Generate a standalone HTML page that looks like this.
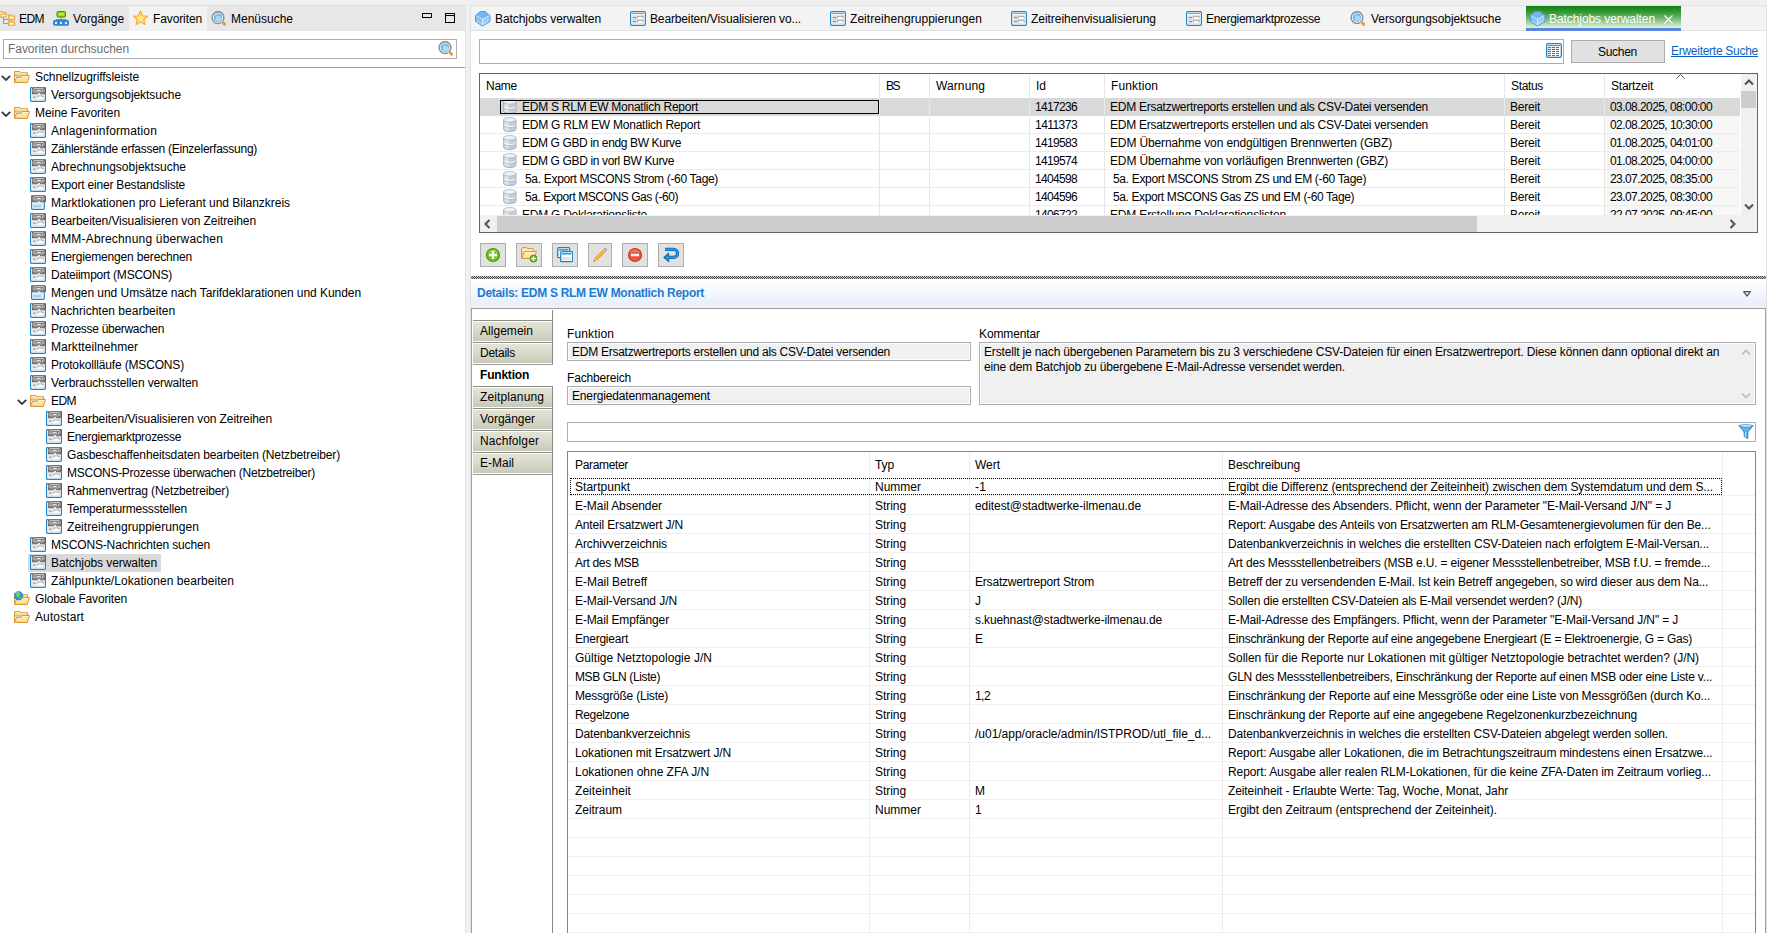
<!DOCTYPE html>
<html lang="de"><head><meta charset="utf-8"><title>Batchjobs verwalten</title>
<style>
html,body{margin:0;padding:0}
body{width:1767px;height:933px;position:relative;overflow:hidden;background:#f0f0f0;font:12px "Liberation Sans",sans-serif;color:#000}
div,span,svg{position:absolute;box-sizing:border-box}
.t{white-space:pre;color:#000}
.g{white-space:pre;color:#6d6d6d}
</style></head><body>

<!-- left panel -->
<div style="left:0px;top:5px;width:466px;height:26px;background:#e7e7e7;border-top:1px solid #dedede"></div>
<div style="left:129px;top:6px;width:78px;height:25px;background:#f2f2f2"></div>
<div style="left:0px;top:31px;width:466px;height:902px;background:#fff;border-right:1px solid #e3e3e3"></div>
<svg width="16" height="16" viewBox="0 0 16 16" style="position:absolute;left:0px;top:10px;"><path d="M3.5 7 V13.5 H8.5 M3.5 9.5 H8.5" stroke="#9a9a9a" stroke-width="1" fill="none"/>
<path d="M-0.5 2.5 L0.5 1.5 H3 L4 2.5 H6 V7 H-0.5Z" fill="#ffe08a" stroke="#dda24a" stroke-width="1"/>
<path d="M-0.3 6.8 L1 4.2 H7 L5.8 7Z" fill="#fff0b8" stroke="#dda24a" stroke-width="0.8"/>
<path d="M8.7 5 H11 L12 6 H14.6 V9.9 H8.7Z" fill="#ffe08a" stroke="#dda24a" stroke-width="1.1"/>
<path d="M8.7 11.2 H11 L12 12.2 H14.6 V15.8 H8.7Z" fill="#ffe08a" stroke="#dda24a" stroke-width="1.1"/>
<path d="M9.6 7.4 H13.8 M9.6 13.6 H13.8" stroke="#fff3c4" stroke-width="1"/></svg>
<span class="t" style="left:19px;top:9px;line-height:20px;letter-spacing:-0.557px;">EDM</span>
<svg width="16" height="16" viewBox="0 0 16 16" style="position:absolute;left:53px;top:11px;"><path d="M8 6 V8.5 M3 10 V8.5 H13 V10" stroke="#8a8a8a" stroke-width="1" fill="none"/>
<rect x="4" y="0.5" width="8.5" height="5.5" rx="1" fill="#8fd000" stroke="#4d8f00" stroke-width="1"/>
<rect x="5.5" y="2" width="5.5" height="2.5" fill="#b6e84a"/>
<rect x="0.5" y="9.5" width="15" height="4.8" rx="0.8" fill="#2f93d6" stroke="#1f7fc0" stroke-width="0.8"/>
<rect x="2" y="11" width="2" height="2" fill="#dff0ff"/><rect x="7" y="11" width="2" height="2" fill="#dff0ff"/><rect x="12" y="11" width="2" height="2" fill="#dff0ff"/>
<path d="M5.5 9.6 V14.2 M10.5 9.6 V14.2" stroke="#1f7fc0" stroke-width="0.8"/></svg>
<span class="t" style="left:73px;top:9px;line-height:20px;letter-spacing:-0.047px;">Vorgänge</span>
<svg width="16" height="16" viewBox="0 0 16 16" style="position:absolute;left:133px;top:10px;"><path d="M7.5 1 L9.5 5.7 L14.6 6.2 L10.8 9.6 L11.9 14.6 L7.5 12 L3.1 14.6 L4.2 9.6 L0.4 6.2 L5.5 5.7Z" fill="#ffd65a" stroke="#f3ab2c" stroke-width="1.1" stroke-linejoin="round"/>
<path d="M7.5 3.4 L8.8 6.6 L12.2 6.9 L9.6 9.2 L10.4 12.4 L7.5 10.7 L4.6 12.4 L5.4 9.2 L2.8 6.9 L6.2 6.6Z" fill="#ffe889"/></svg>
<span class="t" style="left:153px;top:9px;line-height:20px;letter-spacing:-0.113px;">Favoriten</span>
<svg width="16" height="16" viewBox="0 0 16 16" style="position:absolute;left:211px;top:11px;"><circle cx="7" cy="6.6" r="5.9" fill="#ffffff" stroke="#8f8f8f" stroke-width="1.5"/>
<circle cx="7" cy="6.6" r="4.3" fill="#66b4ee"/>
<circle cx="7.5" cy="7.6" r="3" fill="#9fdcf9"/>
<path d="M3.9 5.6 A3.4 3.4 0 0 1 8.1 3.2 A5.4 5.4 0 0 0 3.9 5.6Z" fill="#cfecff"/>
<path d="M11 10.6 L12 11.6" stroke="#bdbdbd" stroke-width="2.2"/>
<path d="M12.6 12.2 L13.5 13.1" stroke="#e9992c" stroke-width="3" stroke-linecap="round"/></svg>
<span class="t" style="left:231px;top:9px;line-height:20px;">Menüsuche</span>
<div style="left:422px;top:13px;width:10px;height:5px;border:1px solid #000"></div>
<div style="left:445px;top:13px;width:10px;height:10px;border:1px solid #000;border-top-width:1px"></div>
<div style="left:445px;top:15px;width:10px;height:1px;background:#000"></div>
<div style="left:3px;top:39px;width:454px;height:20px;border:1px solid #abadb3;background:#fff"></div>
<span class="g" style="left:8px;top:40px;line-height:18px;letter-spacing:-0.05px;">Favoriten durchsuchen</span>
<svg width="16" height="16" viewBox="0 0 16 16" style="position:absolute;left:438px;top:41px;"><circle cx="7" cy="6.6" r="5.9" fill="#ffffff" stroke="#8f8f8f" stroke-width="1.5"/>
<circle cx="7" cy="6.6" r="4.3" fill="#66b4ee"/>
<circle cx="7.5" cy="7.6" r="3" fill="#9fdcf9"/>
<path d="M3.9 5.6 A3.4 3.4 0 0 1 8.1 3.2 A5.4 5.4 0 0 0 3.9 5.6Z" fill="#cfecff"/>
<path d="M11 10.6 L12 11.6" stroke="#bdbdbd" stroke-width="2.2"/>
<path d="M12.6 12.2 L13.5 13.1" stroke="#e9992c" stroke-width="3" stroke-linecap="round"/></svg>
<div style="left:0px;top:67px;width:465px;height:1px;background:#a0a0a0"></div>
<!-- tree -->
<svg width="10" height="6" viewBox="0 0 10 6" style="position:absolute;left:1px;top:75px;"><path d="M0.8 0.8 L5 5 L9.2 0.8" fill="none" stroke="#3a3a3a" stroke-width="1.8"/></svg>
<svg width="16" height="16" viewBox="0 0 16 16" style="position:absolute;left:14px;top:70px;"><path d="M0.5 12.5 V1.5 H6 L7 2.8 H13.5 V6 H0.5Z" fill="#f8d98a" stroke="#d39a40" stroke-width="1" stroke-linejoin="round"/>
<path d="M1.5 2.6 H5.6 L6.6 3.9 H12.5" stroke="#fdf0c4" stroke-width="1" fill="none"/>
<path d="M0.6 12.5 L2.3 7.5 H6.9 L8.1 5.5 H15.5 L13.4 12.5Z" fill="#ffe394" stroke="#d39a40" stroke-width="1" stroke-linejoin="round"/>
<path d="M3 8.6 H7.4 L8.6 6.6 H14.2" stroke="#fff6d8" stroke-width="1" fill="none"/>
<path d="M1.8 11.5 H13" stroke="#ffd56c" stroke-width="1" fill="none"/></svg>
<span class="t" style="left:35px;top:68px;line-height:18px;letter-spacing:-0.087px;">Schnellzugriffsleiste</span>
<svg width="16" height="16" viewBox="0 0 16 16" style="position:absolute;left:30px;top:87px;"><rect x="0.6" y="0.6" width="14.8" height="13.8" rx="0.8" fill="#fdfdfd" stroke="#1c86c6" stroke-width="1.2"/>
<rect x="1.3" y="6" width="13.4" height="7" fill="#e9e9e9"/>
<rect x="2" y="0" width="5.4" height="1.3" fill="#9a9a9a"/><rect x="8.8" y="0" width="5.6" height="1.3" fill="#9a9a9a"/>
<rect x="2" y="0.6" width="14" height="5.6" rx="1.2" fill="#5e5e5e"/>
<rect x="3.1" y="1.7" width="11" height="3.2" rx="1" fill="none" stroke="#d8d8d8" stroke-width="1"/>
<rect x="6.4" y="2.8" width="4.4" height="1" fill="#ffffff"/><rect x="4.4" y="2.8" width="1" height="1" fill="#fff"/><rect x="11.8" y="2.8" width="1" height="1" fill="#fff"/>
<path d="M2 6 H16 V7.2 H10.6 L9 5.6 L7.4 7.2 H2Z" fill="#777777"/>
<path d="M7.2 7.6 L9 5.9 L10.8 7.6Z" fill="#f6f6f6"/>
<rect x="3" y="9.6" width="2.6" height="1" fill="#8a8a8a"/>
<rect x="7.6" y="9" width="5.6" height="3" fill="#ffffff"/><path d="M7.6 10.6 V9 H13.2 V10.6" fill="none" stroke="#a8a8a8" stroke-width="0.9"/></svg>
<span class="t" style="left:51px;top:86px;line-height:18px;letter-spacing:-0.064px;">Versorgungsobjektsuche</span>
<svg width="10" height="6" viewBox="0 0 10 6" style="position:absolute;left:1px;top:111px;"><path d="M0.8 0.8 L5 5 L9.2 0.8" fill="none" stroke="#3a3a3a" stroke-width="1.8"/></svg>
<svg width="16" height="16" viewBox="0 0 16 16" style="position:absolute;left:14px;top:106px;"><path d="M0.5 12.5 V1.5 H6 L7 2.8 H13.5 V6 H0.5Z" fill="#f8d98a" stroke="#d39a40" stroke-width="1" stroke-linejoin="round"/>
<path d="M1.5 2.6 H5.6 L6.6 3.9 H12.5" stroke="#fdf0c4" stroke-width="1" fill="none"/>
<path d="M0.6 12.5 L2.3 7.5 H6.9 L8.1 5.5 H15.5 L13.4 12.5Z" fill="#ffe394" stroke="#d39a40" stroke-width="1" stroke-linejoin="round"/>
<path d="M3 8.6 H7.4 L8.6 6.6 H14.2" stroke="#fff6d8" stroke-width="1" fill="none"/>
<path d="M1.8 11.5 H13" stroke="#ffd56c" stroke-width="1" fill="none"/></svg>
<span class="t" style="left:35px;top:104px;line-height:18px;letter-spacing:-0.069px;">Meine Favoriten</span>
<svg width="16" height="16" viewBox="0 0 16 16" style="position:absolute;left:30px;top:123px;"><rect x="0.6" y="0.6" width="14.8" height="13.8" rx="0.8" fill="#fdfdfd" stroke="#1c86c6" stroke-width="1.2"/>
<rect x="1.3" y="6" width="13.4" height="7" fill="#e9e9e9"/>
<rect x="2" y="0" width="5.4" height="1.3" fill="#9a9a9a"/><rect x="8.8" y="0" width="5.6" height="1.3" fill="#9a9a9a"/>
<rect x="2" y="0.6" width="14" height="5.6" rx="1.2" fill="#5e5e5e"/>
<rect x="3.1" y="1.7" width="11" height="3.2" rx="1" fill="none" stroke="#d8d8d8" stroke-width="1"/>
<rect x="6.4" y="2.8" width="4.4" height="1" fill="#ffffff"/><rect x="4.4" y="2.8" width="1" height="1" fill="#fff"/><rect x="11.8" y="2.8" width="1" height="1" fill="#fff"/>
<path d="M2 6 H16 V7.2 H10.6 L9 5.6 L7.4 7.2 H2Z" fill="#777777"/>
<path d="M7.2 7.6 L9 5.9 L10.8 7.6Z" fill="#f6f6f6"/>
<rect x="3" y="9.6" width="2.6" height="1" fill="#8a8a8a"/>
<rect x="7.6" y="9" width="5.6" height="3" fill="#ffffff"/><path d="M7.6 10.6 V9 H13.2 V10.6" fill="none" stroke="#a8a8a8" stroke-width="0.9"/></svg>
<span class="t" style="left:51px;top:122px;line-height:18px;letter-spacing:0.145px;">Anlageninformation</span>
<svg width="16" height="16" viewBox="0 0 16 16" style="position:absolute;left:30px;top:141px;"><rect x="0.6" y="0.6" width="14.8" height="13.8" rx="0.8" fill="#fdfdfd" stroke="#1c86c6" stroke-width="1.2"/>
<rect x="1.3" y="6" width="13.4" height="7" fill="#e9e9e9"/>
<rect x="2" y="0" width="5.4" height="1.3" fill="#9a9a9a"/><rect x="8.8" y="0" width="5.6" height="1.3" fill="#9a9a9a"/>
<rect x="2" y="0.6" width="14" height="5.6" rx="1.2" fill="#5e5e5e"/>
<rect x="3.1" y="1.7" width="11" height="3.2" rx="1" fill="none" stroke="#d8d8d8" stroke-width="1"/>
<rect x="6.4" y="2.8" width="4.4" height="1" fill="#ffffff"/><rect x="4.4" y="2.8" width="1" height="1" fill="#fff"/><rect x="11.8" y="2.8" width="1" height="1" fill="#fff"/>
<path d="M2 6 H16 V7.2 H10.6 L9 5.6 L7.4 7.2 H2Z" fill="#777777"/>
<path d="M7.2 7.6 L9 5.9 L10.8 7.6Z" fill="#f6f6f6"/>
<rect x="3" y="9.6" width="2.6" height="1" fill="#8a8a8a"/>
<rect x="7.6" y="9" width="5.6" height="3" fill="#ffffff"/><path d="M7.6 10.6 V9 H13.2 V10.6" fill="none" stroke="#a8a8a8" stroke-width="0.9"/></svg>
<span class="t" style="left:51px;top:140px;line-height:18px;letter-spacing:-0.258px;">Zählerstände erfassen (Einzelerfassung)</span>
<svg width="16" height="16" viewBox="0 0 16 16" style="position:absolute;left:30px;top:159px;"><rect x="0.6" y="0.6" width="14.8" height="13.8" rx="0.8" fill="#fdfdfd" stroke="#1c86c6" stroke-width="1.2"/>
<rect x="1.3" y="6" width="13.4" height="7" fill="#e9e9e9"/>
<rect x="2" y="0" width="5.4" height="1.3" fill="#9a9a9a"/><rect x="8.8" y="0" width="5.6" height="1.3" fill="#9a9a9a"/>
<rect x="2" y="0.6" width="14" height="5.6" rx="1.2" fill="#5e5e5e"/>
<rect x="3.1" y="1.7" width="11" height="3.2" rx="1" fill="none" stroke="#d8d8d8" stroke-width="1"/>
<rect x="6.4" y="2.8" width="4.4" height="1" fill="#ffffff"/><rect x="4.4" y="2.8" width="1" height="1" fill="#fff"/><rect x="11.8" y="2.8" width="1" height="1" fill="#fff"/>
<path d="M2 6 H16 V7.2 H10.6 L9 5.6 L7.4 7.2 H2Z" fill="#777777"/>
<path d="M7.2 7.6 L9 5.9 L10.8 7.6Z" fill="#f6f6f6"/>
<rect x="3" y="9.6" width="2.6" height="1" fill="#8a8a8a"/>
<rect x="7.6" y="9" width="5.6" height="3" fill="#ffffff"/><path d="M7.6 10.6 V9 H13.2 V10.6" fill="none" stroke="#a8a8a8" stroke-width="0.9"/></svg>
<span class="t" style="left:51px;top:158px;line-height:18px;letter-spacing:0.012px;">Abrechnungsobjektsuche</span>
<svg width="16" height="16" viewBox="0 0 16 16" style="position:absolute;left:30px;top:177px;"><rect x="0.6" y="0.6" width="14.8" height="13.8" rx="0.8" fill="#fdfdfd" stroke="#1c86c6" stroke-width="1.2"/>
<rect x="1.3" y="6" width="13.4" height="7" fill="#e9e9e9"/>
<rect x="2" y="0" width="5.4" height="1.3" fill="#9a9a9a"/><rect x="8.8" y="0" width="5.6" height="1.3" fill="#9a9a9a"/>
<rect x="2" y="0.6" width="14" height="5.6" rx="1.2" fill="#5e5e5e"/>
<rect x="3.1" y="1.7" width="11" height="3.2" rx="1" fill="none" stroke="#d8d8d8" stroke-width="1"/>
<rect x="6.4" y="2.8" width="4.4" height="1" fill="#ffffff"/><rect x="4.4" y="2.8" width="1" height="1" fill="#fff"/><rect x="11.8" y="2.8" width="1" height="1" fill="#fff"/>
<path d="M2 6 H16 V7.2 H10.6 L9 5.6 L7.4 7.2 H2Z" fill="#777777"/>
<path d="M7.2 7.6 L9 5.9 L10.8 7.6Z" fill="#f6f6f6"/>
<rect x="3" y="9.6" width="2.6" height="1" fill="#8a8a8a"/>
<rect x="7.6" y="9" width="5.6" height="3" fill="#ffffff"/><path d="M7.6 10.6 V9 H13.2 V10.6" fill="none" stroke="#a8a8a8" stroke-width="0.9"/></svg>
<span class="t" style="left:51px;top:176px;line-height:18px;letter-spacing:-0.207px;">Export einer Bestandsliste</span>
<svg width="16" height="16" viewBox="0 0 16 16" style="position:absolute;left:30px;top:195px;"><rect x="1.6" y="0.6" width="12.6" height="13.8" rx="0.8" fill="#fdfdfd" stroke="#1c86c6" stroke-width="1.2"/>
<rect x="2.4" y="7" width="11" height="3" fill="#d9ecf8"/>
<rect x="3" y="10" width="8.6" height="2.6" fill="#a7d0e9"/>
<rect x="2" y="0" width="5.4" height="1.3" fill="#9a9a9a"/><rect x="8.8" y="0" width="5.6" height="1.3" fill="#9a9a9a"/>
<rect x="2" y="0.6" width="14" height="5.6" rx="1.2" fill="#5e5e5e"/>
<rect x="3.1" y="1.7" width="11" height="3.2" rx="1" fill="none" stroke="#d8d8d8" stroke-width="1"/>
<rect x="6.4" y="2.8" width="4.4" height="1" fill="#ffffff"/><rect x="4.4" y="2.8" width="1" height="1" fill="#fff"/><rect x="11.8" y="2.8" width="1" height="1" fill="#fff"/>
<path d="M2 6 H16 V7.2 H10.6 L9 5.6 L7.4 7.2 H2Z" fill="#777777"/></svg>
<span class="t" style="left:51px;top:194px;line-height:18px;letter-spacing:-0.024px;">Marktlokationen pro Lieferant und Bilanzkreis</span>
<svg width="16" height="16" viewBox="0 0 16 16" style="position:absolute;left:30px;top:213px;"><rect x="0.6" y="0.6" width="14.8" height="13.8" rx="0.8" fill="#fdfdfd" stroke="#1c86c6" stroke-width="1.2"/>
<rect x="1.3" y="6" width="13.4" height="7" fill="#e9e9e9"/>
<rect x="2" y="0" width="5.4" height="1.3" fill="#9a9a9a"/><rect x="8.8" y="0" width="5.6" height="1.3" fill="#9a9a9a"/>
<rect x="2" y="0.6" width="14" height="5.6" rx="1.2" fill="#5e5e5e"/>
<rect x="3.1" y="1.7" width="11" height="3.2" rx="1" fill="none" stroke="#d8d8d8" stroke-width="1"/>
<rect x="6.4" y="2.8" width="4.4" height="1" fill="#ffffff"/><rect x="4.4" y="2.8" width="1" height="1" fill="#fff"/><rect x="11.8" y="2.8" width="1" height="1" fill="#fff"/>
<path d="M2 6 H16 V7.2 H10.6 L9 5.6 L7.4 7.2 H2Z" fill="#777777"/>
<path d="M7.2 7.6 L9 5.9 L10.8 7.6Z" fill="#f6f6f6"/>
<rect x="3" y="9.6" width="2.6" height="1" fill="#8a8a8a"/>
<rect x="7.6" y="9" width="5.6" height="3" fill="#ffffff"/><path d="M7.6 10.6 V9 H13.2 V10.6" fill="none" stroke="#a8a8a8" stroke-width="0.9"/></svg>
<span class="t" style="left:51px;top:212px;line-height:18px;letter-spacing:-0.091px;">Bearbeiten/Visualisieren von Zeitreihen</span>
<svg width="16" height="16" viewBox="0 0 16 16" style="position:absolute;left:30px;top:231px;"><rect x="0.6" y="0.6" width="14.8" height="13.8" rx="0.8" fill="#fdfdfd" stroke="#1c86c6" stroke-width="1.2"/>
<rect x="1.3" y="6" width="13.4" height="7" fill="#e9e9e9"/>
<rect x="2" y="0" width="5.4" height="1.3" fill="#9a9a9a"/><rect x="8.8" y="0" width="5.6" height="1.3" fill="#9a9a9a"/>
<rect x="2" y="0.6" width="14" height="5.6" rx="1.2" fill="#5e5e5e"/>
<rect x="3.1" y="1.7" width="11" height="3.2" rx="1" fill="none" stroke="#d8d8d8" stroke-width="1"/>
<rect x="6.4" y="2.8" width="4.4" height="1" fill="#ffffff"/><rect x="4.4" y="2.8" width="1" height="1" fill="#fff"/><rect x="11.8" y="2.8" width="1" height="1" fill="#fff"/>
<path d="M2 6 H16 V7.2 H10.6 L9 5.6 L7.4 7.2 H2Z" fill="#777777"/>
<path d="M7.2 7.6 L9 5.9 L10.8 7.6Z" fill="#f6f6f6"/>
<rect x="3" y="9.6" width="2.6" height="1" fill="#8a8a8a"/>
<rect x="7.6" y="9" width="5.6" height="3" fill="#ffffff"/><path d="M7.6 10.6 V9 H13.2 V10.6" fill="none" stroke="#a8a8a8" stroke-width="0.9"/></svg>
<span class="t" style="left:51px;top:230px;line-height:18px;letter-spacing:0.184px;">MMM-Abrechnung überwachen</span>
<svg width="16" height="16" viewBox="0 0 16 16" style="position:absolute;left:30px;top:249px;"><rect x="0.6" y="0.6" width="14.8" height="13.8" rx="0.8" fill="#fdfdfd" stroke="#1c86c6" stroke-width="1.2"/>
<rect x="1.3" y="6" width="13.4" height="7" fill="#e9e9e9"/>
<rect x="2" y="0" width="5.4" height="1.3" fill="#9a9a9a"/><rect x="8.8" y="0" width="5.6" height="1.3" fill="#9a9a9a"/>
<rect x="2" y="0.6" width="14" height="5.6" rx="1.2" fill="#5e5e5e"/>
<rect x="3.1" y="1.7" width="11" height="3.2" rx="1" fill="none" stroke="#d8d8d8" stroke-width="1"/>
<rect x="6.4" y="2.8" width="4.4" height="1" fill="#ffffff"/><rect x="4.4" y="2.8" width="1" height="1" fill="#fff"/><rect x="11.8" y="2.8" width="1" height="1" fill="#fff"/>
<path d="M2 6 H16 V7.2 H10.6 L9 5.6 L7.4 7.2 H2Z" fill="#777777"/>
<path d="M7.2 7.6 L9 5.9 L10.8 7.6Z" fill="#f6f6f6"/>
<rect x="3" y="9.6" width="2.6" height="1" fill="#8a8a8a"/>
<rect x="7.6" y="9" width="5.6" height="3" fill="#ffffff"/><path d="M7.6 10.6 V9 H13.2 V10.6" fill="none" stroke="#a8a8a8" stroke-width="0.9"/></svg>
<span class="t" style="left:51px;top:248px;line-height:18px;letter-spacing:-0.163px;">Energiemengen berechnen</span>
<svg width="16" height="16" viewBox="0 0 16 16" style="position:absolute;left:30px;top:267px;"><rect x="0.6" y="0.6" width="14.8" height="13.8" rx="0.8" fill="#fdfdfd" stroke="#1c86c6" stroke-width="1.2"/>
<rect x="1.3" y="6" width="13.4" height="7" fill="#e9e9e9"/>
<rect x="2" y="0" width="5.4" height="1.3" fill="#9a9a9a"/><rect x="8.8" y="0" width="5.6" height="1.3" fill="#9a9a9a"/>
<rect x="2" y="0.6" width="14" height="5.6" rx="1.2" fill="#5e5e5e"/>
<rect x="3.1" y="1.7" width="11" height="3.2" rx="1" fill="none" stroke="#d8d8d8" stroke-width="1"/>
<rect x="6.4" y="2.8" width="4.4" height="1" fill="#ffffff"/><rect x="4.4" y="2.8" width="1" height="1" fill="#fff"/><rect x="11.8" y="2.8" width="1" height="1" fill="#fff"/>
<path d="M2 6 H16 V7.2 H10.6 L9 5.6 L7.4 7.2 H2Z" fill="#777777"/>
<path d="M7.2 7.6 L9 5.9 L10.8 7.6Z" fill="#f6f6f6"/>
<rect x="3" y="9.6" width="2.6" height="1" fill="#8a8a8a"/>
<rect x="7.6" y="9" width="5.6" height="3" fill="#ffffff"/><path d="M7.6 10.6 V9 H13.2 V10.6" fill="none" stroke="#a8a8a8" stroke-width="0.9"/></svg>
<span class="t" style="left:51px;top:266px;line-height:18px;letter-spacing:-0.218px;">Dateiimport (MSCONS)</span>
<svg width="16" height="16" viewBox="0 0 16 16" style="position:absolute;left:30px;top:285px;"><rect x="1.6" y="0.6" width="12.6" height="13.8" rx="0.8" fill="#fdfdfd" stroke="#1c86c6" stroke-width="1.2"/>
<rect x="2.4" y="7" width="11" height="3" fill="#d9ecf8"/>
<rect x="3" y="10" width="8.6" height="2.6" fill="#a7d0e9"/>
<rect x="2" y="0" width="5.4" height="1.3" fill="#9a9a9a"/><rect x="8.8" y="0" width="5.6" height="1.3" fill="#9a9a9a"/>
<rect x="2" y="0.6" width="14" height="5.6" rx="1.2" fill="#5e5e5e"/>
<rect x="3.1" y="1.7" width="11" height="3.2" rx="1" fill="none" stroke="#d8d8d8" stroke-width="1"/>
<rect x="6.4" y="2.8" width="4.4" height="1" fill="#ffffff"/><rect x="4.4" y="2.8" width="1" height="1" fill="#fff"/><rect x="11.8" y="2.8" width="1" height="1" fill="#fff"/>
<path d="M2 6 H16 V7.2 H10.6 L9 5.6 L7.4 7.2 H2Z" fill="#777777"/></svg>
<span class="t" style="left:51px;top:284px;line-height:18px;letter-spacing:-0.049px;">Mengen und Umsätze nach Tarifdeklarationen und Kunden</span>
<svg width="16" height="16" viewBox="0 0 16 16" style="position:absolute;left:30px;top:303px;"><rect x="0.6" y="0.6" width="14.8" height="13.8" rx="0.8" fill="#fdfdfd" stroke="#1c86c6" stroke-width="1.2"/>
<rect x="1.3" y="6" width="13.4" height="7" fill="#e9e9e9"/>
<rect x="2" y="0" width="5.4" height="1.3" fill="#9a9a9a"/><rect x="8.8" y="0" width="5.6" height="1.3" fill="#9a9a9a"/>
<rect x="2" y="0.6" width="14" height="5.6" rx="1.2" fill="#5e5e5e"/>
<rect x="3.1" y="1.7" width="11" height="3.2" rx="1" fill="none" stroke="#d8d8d8" stroke-width="1"/>
<rect x="6.4" y="2.8" width="4.4" height="1" fill="#ffffff"/><rect x="4.4" y="2.8" width="1" height="1" fill="#fff"/><rect x="11.8" y="2.8" width="1" height="1" fill="#fff"/>
<path d="M2 6 H16 V7.2 H10.6 L9 5.6 L7.4 7.2 H2Z" fill="#777777"/>
<path d="M7.2 7.6 L9 5.9 L10.8 7.6Z" fill="#f6f6f6"/>
<rect x="3" y="9.6" width="2.6" height="1" fill="#8a8a8a"/>
<rect x="7.6" y="9" width="5.6" height="3" fill="#ffffff"/><path d="M7.6 10.6 V9 H13.2 V10.6" fill="none" stroke="#a8a8a8" stroke-width="0.9"/></svg>
<span class="t" style="left:51px;top:302px;line-height:18px;">Nachrichten bearbeiten</span>
<svg width="16" height="16" viewBox="0 0 16 16" style="position:absolute;left:30px;top:321px;"><rect x="0.6" y="0.6" width="14.8" height="13.8" rx="0.8" fill="#fdfdfd" stroke="#1c86c6" stroke-width="1.2"/>
<rect x="1.3" y="6" width="13.4" height="7" fill="#e9e9e9"/>
<rect x="2" y="0" width="5.4" height="1.3" fill="#9a9a9a"/><rect x="8.8" y="0" width="5.6" height="1.3" fill="#9a9a9a"/>
<rect x="2" y="0.6" width="14" height="5.6" rx="1.2" fill="#5e5e5e"/>
<rect x="3.1" y="1.7" width="11" height="3.2" rx="1" fill="none" stroke="#d8d8d8" stroke-width="1"/>
<rect x="6.4" y="2.8" width="4.4" height="1" fill="#ffffff"/><rect x="4.4" y="2.8" width="1" height="1" fill="#fff"/><rect x="11.8" y="2.8" width="1" height="1" fill="#fff"/>
<path d="M2 6 H16 V7.2 H10.6 L9 5.6 L7.4 7.2 H2Z" fill="#777777"/>
<path d="M7.2 7.6 L9 5.9 L10.8 7.6Z" fill="#f6f6f6"/>
<rect x="3" y="9.6" width="2.6" height="1" fill="#8a8a8a"/>
<rect x="7.6" y="9" width="5.6" height="3" fill="#ffffff"/><path d="M7.6 10.6 V9 H13.2 V10.6" fill="none" stroke="#a8a8a8" stroke-width="0.9"/></svg>
<span class="t" style="left:51px;top:320px;line-height:18px;letter-spacing:-0.301px;">Prozesse überwachen</span>
<svg width="16" height="16" viewBox="0 0 16 16" style="position:absolute;left:30px;top:339px;"><rect x="0.6" y="0.6" width="14.8" height="13.8" rx="0.8" fill="#fdfdfd" stroke="#1c86c6" stroke-width="1.2"/>
<rect x="1.3" y="6" width="13.4" height="7" fill="#e9e9e9"/>
<rect x="2" y="0" width="5.4" height="1.3" fill="#9a9a9a"/><rect x="8.8" y="0" width="5.6" height="1.3" fill="#9a9a9a"/>
<rect x="2" y="0.6" width="14" height="5.6" rx="1.2" fill="#5e5e5e"/>
<rect x="3.1" y="1.7" width="11" height="3.2" rx="1" fill="none" stroke="#d8d8d8" stroke-width="1"/>
<rect x="6.4" y="2.8" width="4.4" height="1" fill="#ffffff"/><rect x="4.4" y="2.8" width="1" height="1" fill="#fff"/><rect x="11.8" y="2.8" width="1" height="1" fill="#fff"/>
<path d="M2 6 H16 V7.2 H10.6 L9 5.6 L7.4 7.2 H2Z" fill="#777777"/>
<path d="M7.2 7.6 L9 5.9 L10.8 7.6Z" fill="#f6f6f6"/>
<rect x="3" y="9.6" width="2.6" height="1" fill="#8a8a8a"/>
<rect x="7.6" y="9" width="5.6" height="3" fill="#ffffff"/><path d="M7.6 10.6 V9 H13.2 V10.6" fill="none" stroke="#a8a8a8" stroke-width="0.9"/></svg>
<span class="t" style="left:51px;top:338px;line-height:18px;letter-spacing:0.065px;">Marktteilnehmer</span>
<svg width="16" height="16" viewBox="0 0 16 16" style="position:absolute;left:30px;top:357px;"><rect x="0.6" y="0.6" width="14.8" height="13.8" rx="0.8" fill="#fdfdfd" stroke="#1c86c6" stroke-width="1.2"/>
<rect x="1.3" y="6" width="13.4" height="7" fill="#e9e9e9"/>
<rect x="2" y="0" width="5.4" height="1.3" fill="#9a9a9a"/><rect x="8.8" y="0" width="5.6" height="1.3" fill="#9a9a9a"/>
<rect x="2" y="0.6" width="14" height="5.6" rx="1.2" fill="#5e5e5e"/>
<rect x="3.1" y="1.7" width="11" height="3.2" rx="1" fill="none" stroke="#d8d8d8" stroke-width="1"/>
<rect x="6.4" y="2.8" width="4.4" height="1" fill="#ffffff"/><rect x="4.4" y="2.8" width="1" height="1" fill="#fff"/><rect x="11.8" y="2.8" width="1" height="1" fill="#fff"/>
<path d="M2 6 H16 V7.2 H10.6 L9 5.6 L7.4 7.2 H2Z" fill="#777777"/>
<path d="M7.2 7.6 L9 5.9 L10.8 7.6Z" fill="#f6f6f6"/>
<rect x="3" y="9.6" width="2.6" height="1" fill="#8a8a8a"/>
<rect x="7.6" y="9" width="5.6" height="3" fill="#ffffff"/><path d="M7.6 10.6 V9 H13.2 V10.6" fill="none" stroke="#a8a8a8" stroke-width="0.9"/></svg>
<span class="t" style="left:51px;top:356px;line-height:18px;letter-spacing:-0.161px;">Protokollläufe (MSCONS)</span>
<svg width="16" height="16" viewBox="0 0 16 16" style="position:absolute;left:30px;top:375px;"><rect x="0.6" y="0.6" width="14.8" height="13.8" rx="0.8" fill="#fdfdfd" stroke="#1c86c6" stroke-width="1.2"/>
<rect x="1.3" y="6" width="13.4" height="7" fill="#e9e9e9"/>
<rect x="2" y="0" width="5.4" height="1.3" fill="#9a9a9a"/><rect x="8.8" y="0" width="5.6" height="1.3" fill="#9a9a9a"/>
<rect x="2" y="0.6" width="14" height="5.6" rx="1.2" fill="#5e5e5e"/>
<rect x="3.1" y="1.7" width="11" height="3.2" rx="1" fill="none" stroke="#d8d8d8" stroke-width="1"/>
<rect x="6.4" y="2.8" width="4.4" height="1" fill="#ffffff"/><rect x="4.4" y="2.8" width="1" height="1" fill="#fff"/><rect x="11.8" y="2.8" width="1" height="1" fill="#fff"/>
<path d="M2 6 H16 V7.2 H10.6 L9 5.6 L7.4 7.2 H2Z" fill="#777777"/>
<path d="M7.2 7.6 L9 5.9 L10.8 7.6Z" fill="#f6f6f6"/>
<rect x="3" y="9.6" width="2.6" height="1" fill="#8a8a8a"/>
<rect x="7.6" y="9" width="5.6" height="3" fill="#ffffff"/><path d="M7.6 10.6 V9 H13.2 V10.6" fill="none" stroke="#a8a8a8" stroke-width="0.9"/></svg>
<span class="t" style="left:51px;top:374px;line-height:18px;letter-spacing:-0.114px;">Verbrauchsstellen verwalten</span>
<svg width="10" height="6" viewBox="0 0 10 6" style="position:absolute;left:17px;top:399px;"><path d="M0.8 0.8 L5 5 L9.2 0.8" fill="none" stroke="#3a3a3a" stroke-width="1.8"/></svg>
<svg width="16" height="16" viewBox="0 0 16 16" style="position:absolute;left:30px;top:394px;"><path d="M0.5 12.5 V1.5 H6 L7 2.8 H13.5 V6 H0.5Z" fill="#f8d98a" stroke="#d39a40" stroke-width="1" stroke-linejoin="round"/>
<path d="M1.5 2.6 H5.6 L6.6 3.9 H12.5" stroke="#fdf0c4" stroke-width="1" fill="none"/>
<path d="M0.6 12.5 L2.3 7.5 H6.9 L8.1 5.5 H15.5 L13.4 12.5Z" fill="#ffe394" stroke="#d39a40" stroke-width="1" stroke-linejoin="round"/>
<path d="M3 8.6 H7.4 L8.6 6.6 H14.2" stroke="#fff6d8" stroke-width="1" fill="none"/>
<path d="M1.8 11.5 H13" stroke="#ffd56c" stroke-width="1" fill="none"/></svg>
<span class="t" style="left:51px;top:392px;line-height:18px;letter-spacing:-0.557px;">EDM</span>
<svg width="16" height="16" viewBox="0 0 16 16" style="position:absolute;left:46px;top:411px;"><rect x="0.6" y="0.6" width="14.8" height="13.8" rx="0.8" fill="#fdfdfd" stroke="#1c86c6" stroke-width="1.2"/>
<rect x="1.3" y="6" width="13.4" height="7" fill="#e9e9e9"/>
<rect x="2" y="0" width="5.4" height="1.3" fill="#9a9a9a"/><rect x="8.8" y="0" width="5.6" height="1.3" fill="#9a9a9a"/>
<rect x="2" y="0.6" width="14" height="5.6" rx="1.2" fill="#5e5e5e"/>
<rect x="3.1" y="1.7" width="11" height="3.2" rx="1" fill="none" stroke="#d8d8d8" stroke-width="1"/>
<rect x="6.4" y="2.8" width="4.4" height="1" fill="#ffffff"/><rect x="4.4" y="2.8" width="1" height="1" fill="#fff"/><rect x="11.8" y="2.8" width="1" height="1" fill="#fff"/>
<path d="M2 6 H16 V7.2 H10.6 L9 5.6 L7.4 7.2 H2Z" fill="#777777"/>
<path d="M7.2 7.6 L9 5.9 L10.8 7.6Z" fill="#f6f6f6"/>
<rect x="3" y="9.6" width="2.6" height="1" fill="#8a8a8a"/>
<rect x="7.6" y="9" width="5.6" height="3" fill="#ffffff"/><path d="M7.6 10.6 V9 H13.2 V10.6" fill="none" stroke="#a8a8a8" stroke-width="0.9"/></svg>
<span class="t" style="left:67px;top:410px;line-height:18px;letter-spacing:-0.091px;">Bearbeiten/Visualisieren von Zeitreihen</span>
<svg width="16" height="16" viewBox="0 0 16 16" style="position:absolute;left:46px;top:429px;"><rect x="0.6" y="0.6" width="14.8" height="13.8" rx="0.8" fill="#fdfdfd" stroke="#1c86c6" stroke-width="1.2"/>
<rect x="1.3" y="6" width="13.4" height="7" fill="#e9e9e9"/>
<rect x="2" y="0" width="5.4" height="1.3" fill="#9a9a9a"/><rect x="8.8" y="0" width="5.6" height="1.3" fill="#9a9a9a"/>
<rect x="2" y="0.6" width="14" height="5.6" rx="1.2" fill="#5e5e5e"/>
<rect x="3.1" y="1.7" width="11" height="3.2" rx="1" fill="none" stroke="#d8d8d8" stroke-width="1"/>
<rect x="6.4" y="2.8" width="4.4" height="1" fill="#ffffff"/><rect x="4.4" y="2.8" width="1" height="1" fill="#fff"/><rect x="11.8" y="2.8" width="1" height="1" fill="#fff"/>
<path d="M2 6 H16 V7.2 H10.6 L9 5.6 L7.4 7.2 H2Z" fill="#777777"/>
<path d="M7.2 7.6 L9 5.9 L10.8 7.6Z" fill="#f6f6f6"/>
<rect x="3" y="9.6" width="2.6" height="1" fill="#8a8a8a"/>
<rect x="7.6" y="9" width="5.6" height="3" fill="#ffffff"/><path d="M7.6 10.6 V9 H13.2 V10.6" fill="none" stroke="#a8a8a8" stroke-width="0.9"/></svg>
<span class="t" style="left:67px;top:428px;line-height:18px;letter-spacing:-0.302px;">Energiemarktprozesse</span>
<svg width="16" height="16" viewBox="0 0 16 16" style="position:absolute;left:46px;top:447px;"><rect x="0.6" y="0.6" width="14.8" height="13.8" rx="0.8" fill="#fdfdfd" stroke="#1c86c6" stroke-width="1.2"/>
<rect x="1.3" y="6" width="13.4" height="7" fill="#e9e9e9"/>
<rect x="2" y="0" width="5.4" height="1.3" fill="#9a9a9a"/><rect x="8.8" y="0" width="5.6" height="1.3" fill="#9a9a9a"/>
<rect x="2" y="0.6" width="14" height="5.6" rx="1.2" fill="#5e5e5e"/>
<rect x="3.1" y="1.7" width="11" height="3.2" rx="1" fill="none" stroke="#d8d8d8" stroke-width="1"/>
<rect x="6.4" y="2.8" width="4.4" height="1" fill="#ffffff"/><rect x="4.4" y="2.8" width="1" height="1" fill="#fff"/><rect x="11.8" y="2.8" width="1" height="1" fill="#fff"/>
<path d="M2 6 H16 V7.2 H10.6 L9 5.6 L7.4 7.2 H2Z" fill="#777777"/>
<path d="M7.2 7.6 L9 5.9 L10.8 7.6Z" fill="#f6f6f6"/>
<rect x="3" y="9.6" width="2.6" height="1" fill="#8a8a8a"/>
<rect x="7.6" y="9" width="5.6" height="3" fill="#ffffff"/><path d="M7.6 10.6 V9 H13.2 V10.6" fill="none" stroke="#a8a8a8" stroke-width="0.9"/></svg>
<span class="t" style="left:67px;top:446px;line-height:18px;letter-spacing:-0.124px;">Gasbeschaffenheitsdaten bearbeiten (Netzbetreiber)</span>
<svg width="16" height="16" viewBox="0 0 16 16" style="position:absolute;left:46px;top:465px;"><rect x="0.6" y="0.6" width="14.8" height="13.8" rx="0.8" fill="#fdfdfd" stroke="#1c86c6" stroke-width="1.2"/>
<rect x="1.3" y="6" width="13.4" height="7" fill="#e9e9e9"/>
<rect x="2" y="0" width="5.4" height="1.3" fill="#9a9a9a"/><rect x="8.8" y="0" width="5.6" height="1.3" fill="#9a9a9a"/>
<rect x="2" y="0.6" width="14" height="5.6" rx="1.2" fill="#5e5e5e"/>
<rect x="3.1" y="1.7" width="11" height="3.2" rx="1" fill="none" stroke="#d8d8d8" stroke-width="1"/>
<rect x="6.4" y="2.8" width="4.4" height="1" fill="#ffffff"/><rect x="4.4" y="2.8" width="1" height="1" fill="#fff"/><rect x="11.8" y="2.8" width="1" height="1" fill="#fff"/>
<path d="M2 6 H16 V7.2 H10.6 L9 5.6 L7.4 7.2 H2Z" fill="#777777"/>
<path d="M7.2 7.6 L9 5.9 L10.8 7.6Z" fill="#f6f6f6"/>
<rect x="3" y="9.6" width="2.6" height="1" fill="#8a8a8a"/>
<rect x="7.6" y="9" width="5.6" height="3" fill="#ffffff"/><path d="M7.6 10.6 V9 H13.2 V10.6" fill="none" stroke="#a8a8a8" stroke-width="0.9"/></svg>
<span class="t" style="left:67px;top:464px;line-height:18px;letter-spacing:-0.256px;">MSCONS-Prozesse überwachen (Netzbetreiber)</span>
<svg width="16" height="16" viewBox="0 0 16 16" style="position:absolute;left:46px;top:483px;"><rect x="0.6" y="0.6" width="14.8" height="13.8" rx="0.8" fill="#fdfdfd" stroke="#1c86c6" stroke-width="1.2"/>
<rect x="1.3" y="6" width="13.4" height="7" fill="#e9e9e9"/>
<rect x="2" y="0" width="5.4" height="1.3" fill="#9a9a9a"/><rect x="8.8" y="0" width="5.6" height="1.3" fill="#9a9a9a"/>
<rect x="2" y="0.6" width="14" height="5.6" rx="1.2" fill="#5e5e5e"/>
<rect x="3.1" y="1.7" width="11" height="3.2" rx="1" fill="none" stroke="#d8d8d8" stroke-width="1"/>
<rect x="6.4" y="2.8" width="4.4" height="1" fill="#ffffff"/><rect x="4.4" y="2.8" width="1" height="1" fill="#fff"/><rect x="11.8" y="2.8" width="1" height="1" fill="#fff"/>
<path d="M2 6 H16 V7.2 H10.6 L9 5.6 L7.4 7.2 H2Z" fill="#777777"/>
<path d="M7.2 7.6 L9 5.9 L10.8 7.6Z" fill="#f6f6f6"/>
<rect x="3" y="9.6" width="2.6" height="1" fill="#8a8a8a"/>
<rect x="7.6" y="9" width="5.6" height="3" fill="#ffffff"/><path d="M7.6 10.6 V9 H13.2 V10.6" fill="none" stroke="#a8a8a8" stroke-width="0.9"/></svg>
<span class="t" style="left:67px;top:482px;line-height:18px;letter-spacing:-0.14px;">Rahmenvertrag (Netzbetreiber)</span>
<svg width="16" height="16" viewBox="0 0 16 16" style="position:absolute;left:46px;top:501px;"><rect x="0.6" y="0.6" width="14.8" height="13.8" rx="0.8" fill="#fdfdfd" stroke="#1c86c6" stroke-width="1.2"/>
<rect x="1.3" y="6" width="13.4" height="7" fill="#e9e9e9"/>
<rect x="2" y="0" width="5.4" height="1.3" fill="#9a9a9a"/><rect x="8.8" y="0" width="5.6" height="1.3" fill="#9a9a9a"/>
<rect x="2" y="0.6" width="14" height="5.6" rx="1.2" fill="#5e5e5e"/>
<rect x="3.1" y="1.7" width="11" height="3.2" rx="1" fill="none" stroke="#d8d8d8" stroke-width="1"/>
<rect x="6.4" y="2.8" width="4.4" height="1" fill="#ffffff"/><rect x="4.4" y="2.8" width="1" height="1" fill="#fff"/><rect x="11.8" y="2.8" width="1" height="1" fill="#fff"/>
<path d="M2 6 H16 V7.2 H10.6 L9 5.6 L7.4 7.2 H2Z" fill="#777777"/>
<path d="M7.2 7.6 L9 5.9 L10.8 7.6Z" fill="#f6f6f6"/>
<rect x="3" y="9.6" width="2.6" height="1" fill="#8a8a8a"/>
<rect x="7.6" y="9" width="5.6" height="3" fill="#ffffff"/><path d="M7.6 10.6 V9 H13.2 V10.6" fill="none" stroke="#a8a8a8" stroke-width="0.9"/></svg>
<span class="t" style="left:67px;top:500px;line-height:18px;letter-spacing:-0.193px;">Temperaturmessstellen</span>
<svg width="16" height="16" viewBox="0 0 16 16" style="position:absolute;left:46px;top:519px;"><rect x="0.6" y="0.6" width="14.8" height="13.8" rx="0.8" fill="#fdfdfd" stroke="#1c86c6" stroke-width="1.2"/>
<rect x="1.3" y="6" width="13.4" height="7" fill="#e9e9e9"/>
<rect x="2" y="0" width="5.4" height="1.3" fill="#9a9a9a"/><rect x="8.8" y="0" width="5.6" height="1.3" fill="#9a9a9a"/>
<rect x="2" y="0.6" width="14" height="5.6" rx="1.2" fill="#5e5e5e"/>
<rect x="3.1" y="1.7" width="11" height="3.2" rx="1" fill="none" stroke="#d8d8d8" stroke-width="1"/>
<rect x="6.4" y="2.8" width="4.4" height="1" fill="#ffffff"/><rect x="4.4" y="2.8" width="1" height="1" fill="#fff"/><rect x="11.8" y="2.8" width="1" height="1" fill="#fff"/>
<path d="M2 6 H16 V7.2 H10.6 L9 5.6 L7.4 7.2 H2Z" fill="#777777"/>
<path d="M7.2 7.6 L9 5.9 L10.8 7.6Z" fill="#f6f6f6"/>
<rect x="3" y="9.6" width="2.6" height="1" fill="#8a8a8a"/>
<rect x="7.6" y="9" width="5.6" height="3" fill="#ffffff"/><path d="M7.6 10.6 V9 H13.2 V10.6" fill="none" stroke="#a8a8a8" stroke-width="0.9"/></svg>
<span class="t" style="left:67px;top:518px;line-height:18px;letter-spacing:0.054px;">Zeitreihengruppierungen</span>
<svg width="16" height="16" viewBox="0 0 16 16" style="position:absolute;left:30px;top:537px;"><rect x="0.6" y="0.6" width="14.8" height="13.8" rx="0.8" fill="#fdfdfd" stroke="#1c86c6" stroke-width="1.2"/>
<rect x="1.3" y="6" width="13.4" height="7" fill="#e9e9e9"/>
<rect x="2" y="0" width="5.4" height="1.3" fill="#9a9a9a"/><rect x="8.8" y="0" width="5.6" height="1.3" fill="#9a9a9a"/>
<rect x="2" y="0.6" width="14" height="5.6" rx="1.2" fill="#5e5e5e"/>
<rect x="3.1" y="1.7" width="11" height="3.2" rx="1" fill="none" stroke="#d8d8d8" stroke-width="1"/>
<rect x="6.4" y="2.8" width="4.4" height="1" fill="#ffffff"/><rect x="4.4" y="2.8" width="1" height="1" fill="#fff"/><rect x="11.8" y="2.8" width="1" height="1" fill="#fff"/>
<path d="M2 6 H16 V7.2 H10.6 L9 5.6 L7.4 7.2 H2Z" fill="#777777"/>
<path d="M7.2 7.6 L9 5.9 L10.8 7.6Z" fill="#f6f6f6"/>
<rect x="3" y="9.6" width="2.6" height="1" fill="#8a8a8a"/>
<rect x="7.6" y="9" width="5.6" height="3" fill="#ffffff"/><path d="M7.6 10.6 V9 H13.2 V10.6" fill="none" stroke="#a8a8a8" stroke-width="0.9"/></svg>
<span class="t" style="left:51px;top:536px;line-height:18px;letter-spacing:-0.149px;">MSCONS-Nachrichten suchen</span>
<div style="left:28px;top:554px;width:133px;height:18px;background:#d9d9d9"></div>
<svg width="16" height="16" viewBox="0 0 16 16" style="position:absolute;left:30px;top:555px;"><rect x="0.6" y="0.6" width="14.8" height="13.8" rx="0.8" fill="#fdfdfd" stroke="#1c86c6" stroke-width="1.2"/>
<rect x="1.3" y="6" width="13.4" height="7" fill="#e9e9e9"/>
<rect x="2" y="0" width="5.4" height="1.3" fill="#9a9a9a"/><rect x="8.8" y="0" width="5.6" height="1.3" fill="#9a9a9a"/>
<rect x="2" y="0.6" width="14" height="5.6" rx="1.2" fill="#5e5e5e"/>
<rect x="3.1" y="1.7" width="11" height="3.2" rx="1" fill="none" stroke="#d8d8d8" stroke-width="1"/>
<rect x="6.4" y="2.8" width="4.4" height="1" fill="#ffffff"/><rect x="4.4" y="2.8" width="1" height="1" fill="#fff"/><rect x="11.8" y="2.8" width="1" height="1" fill="#fff"/>
<path d="M2 6 H16 V7.2 H10.6 L9 5.6 L7.4 7.2 H2Z" fill="#777777"/>
<path d="M7.2 7.6 L9 5.9 L10.8 7.6Z" fill="#f6f6f6"/>
<rect x="3" y="9.6" width="2.6" height="1" fill="#8a8a8a"/>
<rect x="7.6" y="9" width="5.6" height="3" fill="#ffffff"/><path d="M7.6 10.6 V9 H13.2 V10.6" fill="none" stroke="#a8a8a8" stroke-width="0.9"/></svg>
<span class="t" style="left:51px;top:554px;line-height:18px;letter-spacing:-0.072px;">Batchjobs verwalten</span>
<svg width="16" height="16" viewBox="0 0 16 16" style="position:absolute;left:30px;top:573px;"><rect x="0.6" y="0.6" width="14.8" height="13.8" rx="0.8" fill="#fdfdfd" stroke="#1c86c6" stroke-width="1.2"/>
<rect x="1.3" y="6" width="13.4" height="7" fill="#e9e9e9"/>
<rect x="2" y="0" width="5.4" height="1.3" fill="#9a9a9a"/><rect x="8.8" y="0" width="5.6" height="1.3" fill="#9a9a9a"/>
<rect x="2" y="0.6" width="14" height="5.6" rx="1.2" fill="#5e5e5e"/>
<rect x="3.1" y="1.7" width="11" height="3.2" rx="1" fill="none" stroke="#d8d8d8" stroke-width="1"/>
<rect x="6.4" y="2.8" width="4.4" height="1" fill="#ffffff"/><rect x="4.4" y="2.8" width="1" height="1" fill="#fff"/><rect x="11.8" y="2.8" width="1" height="1" fill="#fff"/>
<path d="M2 6 H16 V7.2 H10.6 L9 5.6 L7.4 7.2 H2Z" fill="#777777"/>
<path d="M7.2 7.6 L9 5.9 L10.8 7.6Z" fill="#f6f6f6"/>
<rect x="3" y="9.6" width="2.6" height="1" fill="#8a8a8a"/>
<rect x="7.6" y="9" width="5.6" height="3" fill="#ffffff"/><path d="M7.6 10.6 V9 H13.2 V10.6" fill="none" stroke="#a8a8a8" stroke-width="0.9"/></svg>
<span class="t" style="left:51px;top:572px;line-height:18px;letter-spacing:0.049px;">Zählpunkte/Lokationen bearbeiten</span>
<svg width="16" height="16" viewBox="0 0 16 16" style="position:absolute;left:14px;top:592px;"><path d="M0.5 12.5 V1.5 H6 L7 2.8 H13.5 V6 H0.5Z" fill="#f8d98a" stroke="#d39a40" stroke-width="1" stroke-linejoin="round"/>
<path d="M1.5 2.6 H5.6 L6.6 3.9 H12.5" stroke="#fdf0c4" stroke-width="1" fill="none"/>
<path d="M0.6 12.5 L2.3 7.5 H6.9 L8.1 5.5 H15.5 L13.4 12.5Z" fill="#ffe394" stroke="#d39a40" stroke-width="1" stroke-linejoin="round"/>
<path d="M3 8.6 H7.4 L8.6 6.6 H14.2" stroke="#fff6d8" stroke-width="1" fill="none"/>
<path d="M1.8 11.5 H13" stroke="#ffd56c" stroke-width="1" fill="none"/></svg>
<svg width="10" height="10" viewBox="0 0 10 10" style="position:absolute;left:14px;top:591px;"><circle cx="4.6" cy="4.8" r="4.3" fill="#2f8fea" stroke="#1f74cf" stroke-width="0.6"/>
<path d="M2.6 2.2 Q4 0.9 5.6 1.6 Q6.4 2.6 5.6 3.6 Q6 5 5 5.6 Q4.4 7 3.4 6.2 Q3.2 5 2.4 4.4 Q2 3.2 2.6 2.2Z" fill="#84da1e"/>
<path d="M5.6 6.4 Q6.6 5.6 7.4 6.2 Q7.2 7.6 6 8 Q5.4 7.2 5.6 6.4Z" fill="#84da1e"/>
<path d="M1.6 3 A3.6 3.6 0 0 1 4 1.2" stroke="#9fd0ff" stroke-width="0.8" fill="none"/></svg>
<span class="t" style="left:35px;top:590px;line-height:18px;letter-spacing:-0.159px;">Globale Favoriten</span>
<svg width="16" height="16" viewBox="0 0 16 16" style="position:absolute;left:14px;top:610px;"><path d="M0.5 12.5 V1.5 H6 L7 2.8 H13.5 V6 H0.5Z" fill="#f8d98a" stroke="#d39a40" stroke-width="1" stroke-linejoin="round"/>
<path d="M1.5 2.6 H5.6 L6.6 3.9 H12.5" stroke="#fdf0c4" stroke-width="1" fill="none"/>
<path d="M0.6 12.5 L2.3 7.5 H6.9 L8.1 5.5 H15.5 L13.4 12.5Z" fill="#ffe394" stroke="#d39a40" stroke-width="1" stroke-linejoin="round"/>
<path d="M3 8.6 H7.4 L8.6 6.6 H14.2" stroke="#fff6d8" stroke-width="1" fill="none"/>
<path d="M1.8 11.5 H13" stroke="#ffd56c" stroke-width="1" fill="none"/></svg>
<span class="t" style="left:35px;top:608px;line-height:18px;letter-spacing:0.111px;">Autostart</span>
<!-- right panel -->
<div style="left:470px;top:5px;width:1297px;height:26px;background:#f3f3f3;border:1px solid #e1e1e1;border-bottom:none"></div>
<div style="left:470px;top:31px;width:1297px;height:902px;background:#fff;border-left:1px solid #e1e1e1;border-right:1px solid #e1e1e1"></div>
<div style="left:470px;top:30px;width:1297px;height:1px;background:#e1e1e1"></div>
<svg width="16" height="16" viewBox="0 0 16 16" style="position:absolute;left:475px;top:11px;"><path d="M5.5 0.5 H10 L15 4.5 V10.5 L7.5 15 L0.5 10.5 V4.5Z" fill="#8ec4f4" stroke="#4a97e0" stroke-width="1" stroke-linejoin="round"/>
<path d="M5.7 1 H9.8 L14.2 4.5 L7.5 7.7 L1 4.5Z" fill="#74b3ee"/>
<path d="M1 5.2 L7.1 8.3 V14.1 L1 10.2Z" fill="#86bff2"/>
<path d="M14.2 5.2 L7.9 8.3 V14.1 L14.2 10.2Z" fill="#9ccbf6"/>
<path d="M2.5 9.8 L7.1 12.6 V14.1 L1 10.2Z" fill="#a9d4f8"/><path d="M12.5 9.8 L7.9 12.6 V14.1 L14.2 10.2Z" fill="#b5dafa"/>
<path d="M1 4.7 L7.5 8 L14.2 4.7" stroke="#eef7ff" stroke-width="0.9" fill="none" stroke-dasharray="1.6 0.7"/>
<path d="M7.5 8 V14.2" stroke="#e8f4ff" stroke-width="0.9" fill="none"/></svg>
<span class="t" style="left:495px;top:9px;line-height:20px;letter-spacing:-0.072px;">Batchjobs verwalten</span>
<svg width="16" height="16" viewBox="0 0 16 16" style="position:absolute;left:630px;top:11px;"><rect x="0.6" y="0.6" width="14.8" height="13.8" rx="1.3" fill="#ffffff" stroke="#1c86c6" stroke-width="1.2"/>
<rect x="2" y="2" width="12" height="1" fill="#49a7e2"/>
<rect x="2.2" y="4.2" width="11.6" height="8.6" fill="#dedede"/>
<rect x="3" y="6" width="3" height="1" fill="#8c8c8c"/><rect x="3" y="10" width="3" height="1" fill="#8c8c8c"/>
<rect x="7.5" y="5.4" width="5.6" height="2.6" fill="#fff"/><rect x="7.5" y="9.4" width="5.6" height="2.6" fill="#fff"/>
<path d="M7.5 7.2 V5.4 H13.1 V7.2 M7.5 11.2 V9.4 H13.1 V11.2" fill="none" stroke="#a0a0a0" stroke-width="0.9"/></svg>
<span class="t" style="left:650px;top:9px;line-height:20px;letter-spacing:-0.139px;">Bearbeiten/Visualisieren vo...</span>
<svg width="16" height="16" viewBox="0 0 16 16" style="position:absolute;left:830px;top:11px;"><rect x="0.6" y="0.6" width="14.8" height="13.8" rx="1.3" fill="#ffffff" stroke="#1c86c6" stroke-width="1.2"/>
<rect x="2" y="2" width="12" height="1" fill="#49a7e2"/>
<rect x="2.2" y="4.2" width="11.6" height="8.6" fill="#dedede"/>
<rect x="3" y="6" width="3" height="1" fill="#8c8c8c"/><rect x="3" y="10" width="3" height="1" fill="#8c8c8c"/>
<rect x="7.5" y="5.4" width="5.6" height="2.6" fill="#fff"/><rect x="7.5" y="9.4" width="5.6" height="2.6" fill="#fff"/>
<path d="M7.5 7.2 V5.4 H13.1 V7.2 M7.5 11.2 V9.4 H13.1 V11.2" fill="none" stroke="#a0a0a0" stroke-width="0.9"/></svg>
<span class="t" style="left:850px;top:9px;line-height:20px;letter-spacing:0.054px;">Zeitreihengruppierungen</span>
<svg width="16" height="16" viewBox="0 0 16 16" style="position:absolute;left:1011px;top:11px;"><rect x="0.6" y="0.6" width="14.8" height="13.8" rx="1.3" fill="#ffffff" stroke="#1c86c6" stroke-width="1.2"/>
<rect x="2" y="2" width="12" height="1" fill="#49a7e2"/>
<rect x="2.2" y="4.2" width="11.6" height="8.6" fill="#dedede"/>
<rect x="3" y="6" width="3" height="1" fill="#8c8c8c"/><rect x="3" y="10" width="3" height="1" fill="#8c8c8c"/>
<rect x="7.5" y="5.4" width="5.6" height="2.6" fill="#fff"/><rect x="7.5" y="9.4" width="5.6" height="2.6" fill="#fff"/>
<path d="M7.5 7.2 V5.4 H13.1 V7.2 M7.5 11.2 V9.4 H13.1 V11.2" fill="none" stroke="#a0a0a0" stroke-width="0.9"/></svg>
<span class="t" style="left:1031px;top:9px;line-height:20px;letter-spacing:-0.045px;">Zeitreihenvisualisierung</span>
<svg width="16" height="16" viewBox="0 0 16 16" style="position:absolute;left:1186px;top:11px;"><rect x="0.6" y="0.6" width="14.8" height="13.8" rx="1.3" fill="#ffffff" stroke="#1c86c6" stroke-width="1.2"/>
<rect x="2" y="2" width="12" height="1" fill="#49a7e2"/>
<rect x="2.2" y="4.2" width="11.6" height="8.6" fill="#dedede"/>
<rect x="3" y="6" width="3" height="1" fill="#8c8c8c"/><rect x="3" y="10" width="3" height="1" fill="#8c8c8c"/>
<rect x="7.5" y="5.4" width="5.6" height="2.6" fill="#fff"/><rect x="7.5" y="9.4" width="5.6" height="2.6" fill="#fff"/>
<path d="M7.5 7.2 V5.4 H13.1 V7.2 M7.5 11.2 V9.4 H13.1 V11.2" fill="none" stroke="#a0a0a0" stroke-width="0.9"/></svg>
<span class="t" style="left:1206px;top:9px;line-height:20px;letter-spacing:-0.302px;">Energiemarktprozesse</span>
<svg width="16" height="16" viewBox="0 0 16 16" style="position:absolute;left:1350px;top:11px;"><circle cx="7" cy="6.6" r="5.9" fill="#ffffff" stroke="#8f8f8f" stroke-width="1.5"/>
<circle cx="7" cy="6.6" r="4.3" fill="#66b4ee"/>
<circle cx="7.5" cy="7.6" r="3" fill="#9fdcf9"/>
<path d="M3.9 5.6 A3.4 3.4 0 0 1 8.1 3.2 A5.4 5.4 0 0 0 3.9 5.6Z" fill="#cfecff"/>
<path d="M11 10.6 L12 11.6" stroke="#bdbdbd" stroke-width="2.2"/>
<path d="M12.6 12.2 L13.5 13.1" stroke="#e9992c" stroke-width="3" stroke-linecap="round"/></svg>
<span class="t" style="left:1371px;top:9px;line-height:20px;letter-spacing:-0.064px;">Versorgungsobjektsuche</span>
<div style="left:1526px;top:6px;width:155px;height:22px;background:linear-gradient(#0f7f0f 0%,#3a9a3a 30%,#7abd7a 60%,#e6f3e0 100%)"></div>
<div style="left:1526px;top:28px;width:155px;height:3px;background:#5b86e0"></div>
<svg width="16" height="16" viewBox="0 0 16 16" style="position:absolute;left:1530px;top:11px;"><path d="M5.5 0.5 H10 L15 4.5 V10.5 L7.5 15 L0.5 10.5 V4.5Z" fill="#8ec4f4" stroke="#4a97e0" stroke-width="1" stroke-linejoin="round"/>
<path d="M5.7 1 H9.8 L14.2 4.5 L7.5 7.7 L1 4.5Z" fill="#74b3ee"/>
<path d="M1 5.2 L7.1 8.3 V14.1 L1 10.2Z" fill="#86bff2"/>
<path d="M14.2 5.2 L7.9 8.3 V14.1 L14.2 10.2Z" fill="#9ccbf6"/>
<path d="M2.5 9.8 L7.1 12.6 V14.1 L1 10.2Z" fill="#a9d4f8"/><path d="M12.5 9.8 L7.9 12.6 V14.1 L14.2 10.2Z" fill="#b5dafa"/>
<path d="M1 4.7 L7.5 8 L14.2 4.7" stroke="#eef7ff" stroke-width="0.9" fill="none" stroke-dasharray="1.6 0.7"/>
<path d="M7.5 8 V14.2" stroke="#e8f4ff" stroke-width="0.9" fill="none"/></svg>
<span class="t" style="left:1549px;top:9px;line-height:20px;letter-spacing:-0.072px;color:#fff">Batchjobs verwalten</span>
<svg width="9" height="9" viewBox="0 0 9 9" style="position:absolute;left:1664px;top:15px;"><path d="M0.5 0.5 L8.5 8.5 M8.5 0.5 L0.5 8.5" stroke="#fff" stroke-width="1.1" fill="none"/></svg>
<div style="left:479px;top:39px;width:1085px;height:25px;border:1px solid #abadb3;background:#fff"></div>
<svg width="16" height="16" viewBox="0 0 16 16" style="position:absolute;left:1546px;top:43px;"><rect x="0.65" y="0.65" width="14.7" height="13.7" rx="1.4" fill="#ffffff" stroke="#1c86c6" stroke-width="1.3"/>
<rect x="2" y="2" width="12" height="1" fill="#3b9ae1"/>
<rect x="2" y="3.5" width="11" height="5" fill="#ececec"/>
<path d="M2 4.5 H13 M2 6.5 H13 M2 8.5 H13 M2 10.5 H13 M2 12.5 H13" stroke="#6a6a6a" stroke-width="1" stroke-dasharray="3 1"/></svg>
<div style="left:1571px;top:40px;width:94px;height:23px;border:1px solid #adadad;background:#e1e1e1"></div>
<span class="t" style="left:1598px;top:42px;line-height:20px;letter-spacing:-0.281px;">Suchen</span>
<span class="t" style="left:1671px;top:41px;line-height:20px;letter-spacing:-0.272px;color:#0a64c8;text-decoration:underline">Erweiterte Suche</span>
<!-- table1 -->
<div style="left:479px;top:73px;width:1279px;height:160px;border:1px solid #646464;background:#fff"></div>
<div style="left:1605px;top:98px;width:135px;height:117px;background:#f7f7f7"></div>
<div style="left:480px;top:98px;width:1260px;height:18px;background:#d9d9d9"></div>
<div style="left:879px;top:74px;width:1px;height:141px;background:#e6e6e6"></div>
<div style="left:929px;top:74px;width:1px;height:141px;background:#e6e6e6"></div>
<div style="left:1029px;top:74px;width:1px;height:141px;background:#e6e6e6"></div>
<div style="left:1104px;top:74px;width:1px;height:141px;background:#e6e6e6"></div>
<div style="left:1504px;top:74px;width:1px;height:141px;background:#e6e6e6"></div>
<div style="left:1604px;top:74px;width:1px;height:141px;background:#e6e6e6"></div>
<div style="left:480px;top:115px;width:1260px;height:1px;background:#ececec"></div>
<div style="left:480px;top:133px;width:1260px;height:1px;background:#ececec"></div>
<div style="left:480px;top:151px;width:1260px;height:1px;background:#ececec"></div>
<div style="left:480px;top:169px;width:1260px;height:1px;background:#ececec"></div>
<div style="left:480px;top:187px;width:1260px;height:1px;background:#ececec"></div>
<div style="left:480px;top:205px;width:1260px;height:1px;background:#ececec"></div>
<div style="left:480px;top:98px;width:1260px;height:18px;background:#d9d9d9"></div>
<div style="left:879px;top:98px;width:1px;height:18px;background:#e9e9e9"></div>
<div style="left:929px;top:98px;width:1px;height:18px;background:#e9e9e9"></div>
<div style="left:1029px;top:98px;width:1px;height:18px;background:#e9e9e9"></div>
<div style="left:1104px;top:98px;width:1px;height:18px;background:#e9e9e9"></div>
<div style="left:1504px;top:98px;width:1px;height:18px;background:#e9e9e9"></div>
<div style="left:1604px;top:98px;width:1px;height:18px;background:#e9e9e9"></div>
<span class="t" style="left:486px;top:76px;line-height:20px;letter-spacing:-0.254px;">Name</span>
<span class="t" style="left:886px;top:76px;line-height:20px;letter-spacing:-1.5px;">BS</span>
<span class="t" style="left:936px;top:76px;line-height:20px;letter-spacing:0.107px;">Warnung</span>
<span class="t" style="left:1036px;top:76px;line-height:20px;">Id</span>
<span class="t" style="left:1111px;top:76px;line-height:20px;letter-spacing:0.123px;">Funktion</span>
<span class="t" style="left:1511px;top:76px;line-height:20px;letter-spacing:-0.333px;">Status</span>
<span class="t" style="left:1611px;top:76px;line-height:20px;letter-spacing:-0.222px;">Startzeit</span>
<svg width="9" height="5" viewBox="0 0 9 5" style="position:absolute;left:1676px;top:74px;"><path d="M0.5 4.5 L4.5 0.5 L8.5 4.5" fill="none" stroke="#555" stroke-width="1"/></svg>
<div style="left:480px;top:98px;width:1260px;height:117px;overflow:hidden">
<svg width="14" height="16" viewBox="0 0 14 16" style="position:absolute;left:23px;top:1px;"><path d="M0.6 2.8 V12.2 A6.2 2.4 0 0 0 13 12.2 V2.8Z" fill="#c2cdd5" stroke="#97a6b0" stroke-width="0.8"/>
<path d="M1.6 3 V12 A5 2 0 0 0 6 13.8 V4.6Z" fill="#dde4e9"/>
<ellipse cx="6.8" cy="2.8" rx="6.2" ry="2.3" fill="#edf1f4" stroke="#a9b5bd" stroke-width="0.8"/>
<path d="M0.8 7 A6.1 2.3 0 0 0 12.8 7 V8.3 A6.1 2.3 0 0 1 0.8 8.3Z" fill="#f1f4f6"/>
<path d="M0.6 8.4 A6.2 2.3 0 0 0 13 8.4" fill="none" stroke="#aab6be" stroke-width="0.7"/></svg>
<span class="t" style="left:42px;top:0px;line-height:18px;letter-spacing:-0.254px;">EDM S RLM EW Monatlich Report</span>
<span class="t" style="left:555px;top:0px;line-height:18px;letter-spacing:-0.672px;">1417236</span>
<span class="t" style="left:630px;top:0px;line-height:18px;letter-spacing:-0.262px;">EDM Ersatzwertreports erstellen und als CSV-Datei versenden</span>
<span class="t" style="left:1030px;top:0px;line-height:18px;letter-spacing:-0.224px;">Bereit</span>
<span class="t" style="left:1130px;top:0px;line-height:18px;letter-spacing:-0.569px;">03.08.2025, 08:00:00</span>
<svg width="14" height="16" viewBox="0 0 14 16" style="position:absolute;left:23px;top:19px;"><path d="M0.6 2.8 V12.2 A6.2 2.4 0 0 0 13 12.2 V2.8Z" fill="#c2cdd5" stroke="#97a6b0" stroke-width="0.8"/>
<path d="M1.6 3 V12 A5 2 0 0 0 6 13.8 V4.6Z" fill="#dde4e9"/>
<ellipse cx="6.8" cy="2.8" rx="6.2" ry="2.3" fill="#edf1f4" stroke="#a9b5bd" stroke-width="0.8"/>
<path d="M0.8 7 A6.1 2.3 0 0 0 12.8 7 V8.3 A6.1 2.3 0 0 1 0.8 8.3Z" fill="#f1f4f6"/>
<path d="M0.6 8.4 A6.2 2.3 0 0 0 13 8.4" fill="none" stroke="#aab6be" stroke-width="0.7"/></svg>
<span class="t" style="left:42px;top:18px;line-height:18px;letter-spacing:-0.231px;">EDM G RLM EW Monatlich Report</span>
<span class="t" style="left:555px;top:18px;line-height:18px;letter-spacing:-0.545px;">1411373</span>
<span class="t" style="left:630px;top:18px;line-height:18px;letter-spacing:-0.262px;">EDM Ersatzwertreports erstellen und als CSV-Datei versenden</span>
<span class="t" style="left:1030px;top:18px;line-height:18px;letter-spacing:-0.224px;">Bereit</span>
<span class="t" style="left:1130px;top:18px;line-height:18px;letter-spacing:-0.569px;">02.08.2025, 10:30:00</span>
<svg width="14" height="16" viewBox="0 0 14 16" style="position:absolute;left:23px;top:37px;"><path d="M0.6 2.8 V12.2 A6.2 2.4 0 0 0 13 12.2 V2.8Z" fill="#c2cdd5" stroke="#97a6b0" stroke-width="0.8"/>
<path d="M1.6 3 V12 A5 2 0 0 0 6 13.8 V4.6Z" fill="#dde4e9"/>
<ellipse cx="6.8" cy="2.8" rx="6.2" ry="2.3" fill="#edf1f4" stroke="#a9b5bd" stroke-width="0.8"/>
<path d="M0.8 7 A6.1 2.3 0 0 0 12.8 7 V8.3 A6.1 2.3 0 0 1 0.8 8.3Z" fill="#f1f4f6"/>
<path d="M0.6 8.4 A6.2 2.3 0 0 0 13 8.4" fill="none" stroke="#aab6be" stroke-width="0.7"/></svg>
<span class="t" style="left:42px;top:36px;line-height:18px;letter-spacing:-0.372px;">EDM G GBD in endg BW Kurve</span>
<span class="t" style="left:555px;top:36px;line-height:18px;letter-spacing:-0.672px;">1419583</span>
<span class="t" style="left:630px;top:36px;line-height:18px;letter-spacing:-0.13px;">EDM Übernahme von endgültigen Brennwerten (GBZ)</span>
<span class="t" style="left:1030px;top:36px;line-height:18px;letter-spacing:-0.224px;">Bereit</span>
<span class="t" style="left:1130px;top:36px;line-height:18px;letter-spacing:-0.569px;">01.08.2025, 04:01:00</span>
<svg width="14" height="16" viewBox="0 0 14 16" style="position:absolute;left:23px;top:55px;"><path d="M0.6 2.8 V12.2 A6.2 2.4 0 0 0 13 12.2 V2.8Z" fill="#c2cdd5" stroke="#97a6b0" stroke-width="0.8"/>
<path d="M1.6 3 V12 A5 2 0 0 0 6 13.8 V4.6Z" fill="#dde4e9"/>
<ellipse cx="6.8" cy="2.8" rx="6.2" ry="2.3" fill="#edf1f4" stroke="#a9b5bd" stroke-width="0.8"/>
<path d="M0.8 7 A6.1 2.3 0 0 0 12.8 7 V8.3 A6.1 2.3 0 0 1 0.8 8.3Z" fill="#f1f4f6"/>
<path d="M0.6 8.4 A6.2 2.3 0 0 0 13 8.4" fill="none" stroke="#aab6be" stroke-width="0.7"/></svg>
<span class="t" style="left:42px;top:54px;line-height:18px;letter-spacing:-0.359px;">EDM G GBD in vorl BW Kurve</span>
<span class="t" style="left:555px;top:54px;line-height:18px;letter-spacing:-0.672px;">1419574</span>
<span class="t" style="left:630px;top:54px;line-height:18px;letter-spacing:-0.144px;">EDM Übernahme von vorläufigen Brennwerten (GBZ)</span>
<span class="t" style="left:1030px;top:54px;line-height:18px;letter-spacing:-0.224px;">Bereit</span>
<span class="t" style="left:1130px;top:54px;line-height:18px;letter-spacing:-0.569px;">01.08.2025, 04:00:00</span>
<svg width="14" height="16" viewBox="0 0 14 16" style="position:absolute;left:23px;top:73px;"><path d="M0.6 2.8 V12.2 A6.2 2.4 0 0 0 13 12.2 V2.8Z" fill="#c2cdd5" stroke="#97a6b0" stroke-width="0.8"/>
<path d="M1.6 3 V12 A5 2 0 0 0 6 13.8 V4.6Z" fill="#dde4e9"/>
<ellipse cx="6.8" cy="2.8" rx="6.2" ry="2.3" fill="#edf1f4" stroke="#a9b5bd" stroke-width="0.8"/>
<path d="M0.8 7 A6.1 2.3 0 0 0 12.8 7 V8.3 A6.1 2.3 0 0 1 0.8 8.3Z" fill="#f1f4f6"/>
<path d="M0.6 8.4 A6.2 2.3 0 0 0 13 8.4" fill="none" stroke="#aab6be" stroke-width="0.7"/></svg>
<span class="t" style="left:42px;top:72px;line-height:18px;letter-spacing:-0.318px;"> 5a. Export MSCONS Strom (-60 Tage)</span>
<span class="t" style="left:555px;top:72px;line-height:18px;letter-spacing:-0.672px;">1404598</span>
<span class="t" style="left:630px;top:72px;line-height:18px;letter-spacing:-0.321px;"> 5a. Export MSCONS Strom ZS und EM (-60 Tage)</span>
<span class="t" style="left:1030px;top:72px;line-height:18px;letter-spacing:-0.224px;">Bereit</span>
<span class="t" style="left:1130px;top:72px;line-height:18px;letter-spacing:-0.569px;">23.07.2025, 08:35:00</span>
<svg width="14" height="16" viewBox="0 0 14 16" style="position:absolute;left:23px;top:91px;"><path d="M0.6 2.8 V12.2 A6.2 2.4 0 0 0 13 12.2 V2.8Z" fill="#c2cdd5" stroke="#97a6b0" stroke-width="0.8"/>
<path d="M1.6 3 V12 A5 2 0 0 0 6 13.8 V4.6Z" fill="#dde4e9"/>
<ellipse cx="6.8" cy="2.8" rx="6.2" ry="2.3" fill="#edf1f4" stroke="#a9b5bd" stroke-width="0.8"/>
<path d="M0.8 7 A6.1 2.3 0 0 0 12.8 7 V8.3 A6.1 2.3 0 0 1 0.8 8.3Z" fill="#f1f4f6"/>
<path d="M0.6 8.4 A6.2 2.3 0 0 0 13 8.4" fill="none" stroke="#aab6be" stroke-width="0.7"/></svg>
<span class="t" style="left:42px;top:90px;line-height:18px;letter-spacing:-0.429px;"> 5a. Export MSCONS Gas (-60)</span>
<span class="t" style="left:555px;top:90px;line-height:18px;letter-spacing:-0.672px;">1404596</span>
<span class="t" style="left:630px;top:90px;line-height:18px;letter-spacing:-0.383px;"> 5a. Export MSCONS Gas ZS und EM (-60 Tage)</span>
<span class="t" style="left:1030px;top:90px;line-height:18px;letter-spacing:-0.224px;">Bereit</span>
<span class="t" style="left:1130px;top:90px;line-height:18px;letter-spacing:-0.569px;">23.07.2025, 08:30:00</span>
<svg width="14" height="16" viewBox="0 0 14 16" style="position:absolute;left:23px;top:109px;"><path d="M0.6 2.8 V12.2 A6.2 2.4 0 0 0 13 12.2 V2.8Z" fill="#c2cdd5" stroke="#97a6b0" stroke-width="0.8"/>
<path d="M1.6 3 V12 A5 2 0 0 0 6 13.8 V4.6Z" fill="#dde4e9"/>
<ellipse cx="6.8" cy="2.8" rx="6.2" ry="2.3" fill="#edf1f4" stroke="#a9b5bd" stroke-width="0.8"/>
<path d="M0.8 7 A6.1 2.3 0 0 0 12.8 7 V8.3 A6.1 2.3 0 0 1 0.8 8.3Z" fill="#f1f4f6"/>
<path d="M0.6 8.4 A6.2 2.3 0 0 0 13 8.4" fill="none" stroke="#aab6be" stroke-width="0.7"/></svg>
<span class="t" style="left:42px;top:108px;line-height:18px;letter-spacing:-0.248px;">EDM G Deklarationsliste</span>
<span class="t" style="left:555px;top:108px;line-height:18px;letter-spacing:-0.672px;">1406722</span>
<span class="t" style="left:630px;top:108px;line-height:18px;letter-spacing:-0.164px;">EDM Erstellung Deklarationslisten</span>
<span class="t" style="left:1030px;top:108px;line-height:18px;letter-spacing:-0.224px;">Bereit</span>
<span class="t" style="left:1130px;top:108px;line-height:18px;letter-spacing:-0.569px;">22.07.2025, 09:45:00</span>
</div>
<div style="left:500px;top:100px;width:379px;height:14px;border:1px solid #000"></div>
<div style="left:1740px;top:74px;width:17px;height:158px;background:#f0f0f0"></div>
<div style="left:1740px;top:74px;width:1px;height:141px;background:#fff"></div>
<div style="left:1741px;top:91px;width:15px;height:17px;background:#cdcdcd"></div>
<svg width="10" height="7" viewBox="0 0 10 7" style="position:absolute;left:1744px;top:79px;"><path d="M1 5.5 L5 1.5 L9 5.5" fill="none" stroke="#505050" stroke-width="2"/></svg>
<svg width="10" height="7" viewBox="0 0 10 7" style="position:absolute;left:1744px;top:203px;"><path d="M1 1.5 L5 5.5 L9 1.5" fill="none" stroke="#505050" stroke-width="2"/></svg>
<div style="left:480px;top:215px;width:1260px;height:17px;background:#f0f0f0"></div>
<div style="left:497px;top:216px;width:980px;height:16px;background:#cdcdcd"></div>
<svg width="7" height="10" viewBox="0 0 7 10" style="position:absolute;left:484px;top:219px;"><path d="M5.5 1 L1.5 5 L5.5 9" fill="none" stroke="#505050" stroke-width="2"/></svg>
<svg width="7" height="10" viewBox="0 0 7 10" style="position:absolute;left:1729px;top:219px;"><path d="M1.5 1 L5.5 5 L1.5 9" fill="none" stroke="#505050" stroke-width="2"/></svg>
<!-- toolbar -->
<div style="left:480px;top:243px;width:26px;height:24px;border:1px solid #adadad;background:#e1e1e1"></div>
<svg width="16" height="16" viewBox="0 0 16 16" style="position:absolute;left:485px;top:247px;"><circle cx="8" cy="8" r="6.5" fill="#77c018" stroke="#4c9a05" stroke-width="1.2"/>
<path d="M3 6.5 A5.2 5.2 0 0 1 13 6.5 A8 8 0 0 0 3 6.5Z" fill="#93d63c"/>
<path d="M8 4 V12 M4 8 H12" stroke="#fff" stroke-width="2.4"/></svg>
<div style="left:516px;top:243px;width:26px;height:24px;border:1px solid #adadad;background:#e1e1e1"></div>
<svg width="16" height="16" viewBox="0 0 16 16" style="position:absolute;left:521px;top:247px;"><path d="M0.5 1.5 L1.5 0.5 H5.5 L6.5 1.5 H12 V4 H13.5 V11.5 H0.5Z" fill="#f9dc8c" stroke="#d39a40" stroke-width="1"/>
<path d="M1.5 2 H11.5 V3.6 H1.5Z" fill="#fdeeb8"/>
<path d="M0.8 11.4 L3.2 4.6 H15.4 L13.2 11.5Z" fill="#ffe59a" stroke="#d39a40" stroke-width="1"/>
<path d="M3.7 5.7 H14.2" stroke="#fff7da" stroke-width="1" fill="none"/>
<circle cx="12.5" cy="11.6" r="3.5" fill="#6cc02a" stroke="#3f8f10" stroke-width="0.9"/>
<path d="M12.5 9.4 V13.8 M10.3 11.6 H14.7" stroke="#fff" stroke-width="1.3"/></svg>
<div style="left:552px;top:243px;width:26px;height:24px;border:1px solid #adadad;background:#e1e1e1"></div>
<svg width="16" height="16" viewBox="0 0 16 16" style="position:absolute;left:557px;top:247px;"><rect x="0.7" y="0.7" width="12" height="10" rx="1" fill="#f2f8fd" stroke="#1c86c6" stroke-width="1.3"/>
<rect x="2" y="2" width="9.4" height="1.6" fill="#3d9be2"/>
<rect x="3.7" y="4.7" width="12" height="10" rx="1" fill="#ffffff" stroke="#1c86c6" stroke-width="1.3"/>
<rect x="5" y="6" width="9.4" height="1.6" fill="#3d9be2"/>
<rect x="5" y="10" width="9.4" height="3.4" fill="#e4e4e4"/></svg>
<div style="left:588px;top:243px;width:24px;height:24px;border:1px solid #adadad;background:#e1e1e1"></div>
<svg width="16" height="16" viewBox="0 0 16 16" style="position:absolute;left:592px;top:247px;"><path d="M1.6 14.4 L2.4 11.6 L12 2 L14 4 L4.4 13.6Z" fill="#f7a823" stroke="#d58a18" stroke-width="0.6"/>
<path d="M3 12.6 L12.6 3" stroke="#fdd58a" stroke-width="0.9"/>
<path d="M12 2 L13.1 0.9 L15.1 2.9 L14 4Z" fill="#e98fc0" stroke="#c06f9b" stroke-width="0.5"/>
<path d="M11.2 2.8 L12 2 L14 4 L13.2 4.8Z" fill="#c9ccd0"/>
<path d="M1.6 14.4 L2.4 11.6 L4.4 13.6Z" fill="#f3dcb0"/><path d="M1.6 14.4 L2 13 L3 14Z" fill="#3a3a3a"/></svg>
<div style="left:622px;top:243px;width:26px;height:24px;border:1px solid #adadad;background:#e1e1e1"></div>
<svg width="16" height="16" viewBox="0 0 16 16" style="position:absolute;left:627px;top:247px;"><circle cx="8" cy="8" r="6.5" fill="#ee5540" stroke="#d13a28" stroke-width="1.2"/>
<path d="M3 6.5 A5.2 5.2 0 0 1 13 6.5 A8 8 0 0 0 3 6.5Z" fill="#f57a68"/>
<rect x="4" y="6.8" width="8" height="2.4" fill="#fff"/></svg>
<div style="left:658px;top:243px;width:26px;height:24px;border:1px solid #adadad;background:#e1e1e1"></div>
<svg width="16" height="16" viewBox="0 0 16 16" style="position:absolute;left:663px;top:247px;"><path d="M2 2.4 H10.6 A4 4 0 0 1 10.6 10.4 H5.5" fill="none" stroke="#0f62ac" stroke-width="3.2" stroke-linejoin="round"/>
<path d="M5.8 5.8 V15 L0.5 10.4Z" fill="#0f62ac" stroke="#0f62ac" stroke-width="0.6" stroke-linejoin="round"/>
<path d="M2 2.4 H10.6 A4 4 0 0 1 10.6 10.4 H5.5" fill="none" stroke="#2a9ae4" stroke-width="1.7"/>
<path d="M5.3 7.4 V13.4 L1.8 10.4Z" fill="#2a9ae4"/></svg>
<div style="left:471px;top:276px;width:1295px;height:3px;background:repeating-conic-gradient(#4a4a4a 0% 25%,#c8c8c8 0% 50%) 0 0/2px 2px"></div>
<div style="left:471px;top:279px;width:1295px;height:27px;background:linear-gradient(#ffffff 0%,#f6f9fe 40%,#e6eefc 100%)"></div>
<div style="left:471px;top:306px;width:1295px;height:2px;background:#f0f0f0"></div>
<span class="t" style="left:477px;top:283px;line-height:20px;letter-spacing:-0.289px;font-weight:bold;color:#1b7bd3">Details: EDM S RLM EW Monatlich Report</span>
<svg width="8" height="6" viewBox="0 0 8 6" style="position:absolute;left:1743px;top:291px;"><path d="M0.6 0.6 H7.4 L4 5.2Z" fill="#e8e8e8" stroke="#505050" stroke-width="1.1" stroke-linejoin="round"/></svg>
<div style="left:471px;top:308px;width:1295px;height:1px;background:#a0a0a0"></div>
<div style="left:471px;top:309px;width:1px;height:624px;background:#a0a0a0"></div>
<div style="left:1765px;top:309px;width:1px;height:624px;background:#a0a0a0"></div>
<!-- vtabs -->
<div style="left:552px;top:310px;width:1px;height:623px;background:#8a8a8a"></div>
<div style="left:473px;top:320px;width:79px;height:1px;background:#8e8e8e"></div>
<div style="left:473px;top:322px;width:79px;height:19px;background:linear-gradient(#e4e4d6 0%,#dadacb 45%,#cfcfc0 80%,#c8c8b8 100%)"></div>
<span class="t" style="left:480px;top:321px;line-height:20px;letter-spacing:0.033px;">Allgemein</span>
<div style="left:473px;top:342px;width:79px;height:1px;background:#8e8e8e"></div>
<div style="left:473px;top:344px;width:79px;height:19px;background:linear-gradient(#e4e4d6 0%,#dadacb 45%,#cfcfc0 80%,#c8c8b8 100%)"></div>
<span class="t" style="left:480px;top:343px;line-height:20px;letter-spacing:-0.241px;">Details</span>
<div style="left:473px;top:364px;width:80px;height:1px;background:#9a9a9a"></div>
<div style="left:552px;top:365px;width:1px;height:21px;background:#fff"></div>
<span class="t" style="left:480px;top:365px;line-height:20px;letter-spacing:-0.205px;font-weight:bold">Funktion</span>
<div style="left:473px;top:386px;width:79px;height:1px;background:#8e8e8e"></div>
<div style="left:473px;top:388px;width:79px;height:19px;background:linear-gradient(#e4e4d6 0%,#dadacb 45%,#cfcfc0 80%,#c8c8b8 100%)"></div>
<span class="t" style="left:480px;top:387px;line-height:20px;letter-spacing:0.118px;">Zeitplanung</span>
<div style="left:473px;top:408px;width:79px;height:1px;background:#8e8e8e"></div>
<div style="left:473px;top:410px;width:79px;height:19px;background:linear-gradient(#e4e4d6 0%,#dadacb 45%,#cfcfc0 80%,#c8c8b8 100%)"></div>
<span class="t" style="left:480px;top:409px;line-height:20px;letter-spacing:-0.042px;">Vorgänger</span>
<div style="left:473px;top:430px;width:79px;height:1px;background:#8e8e8e"></div>
<div style="left:473px;top:432px;width:79px;height:19px;background:linear-gradient(#e4e4d6 0%,#dadacb 45%,#cfcfc0 80%,#c8c8b8 100%)"></div>
<span class="t" style="left:480px;top:431px;line-height:20px;letter-spacing:0.097px;">Nachfolger</span>
<div style="left:473px;top:452px;width:79px;height:1px;background:#8e8e8e"></div>
<div style="left:473px;top:454px;width:79px;height:19px;background:linear-gradient(#e4e4d6 0%,#dadacb 45%,#cfcfc0 80%,#c8c8b8 100%)"></div>
<span class="t" style="left:480px;top:453px;line-height:20px;">E-Mail</span>
<div style="left:473px;top:474px;width:80px;height:1px;background:#9a9a9a"></div>
<!-- form -->
<span class="t" style="left:567px;top:325px;line-height:18px;letter-spacing:0.123px;">Funktion</span>
<div style="left:567px;top:342px;width:404px;height:19px;border:1px solid #abadb3;background:#f0f0f0;box-shadow:inset 0 0 0 1px #fff"></div>
<span class="t" style="left:572px;top:343px;line-height:18px;letter-spacing:-0.262px;">EDM Ersatzwertreports erstellen und als CSV-Datei versenden</span>
<span class="t" style="left:567px;top:369px;line-height:18px;letter-spacing:-0.185px;">Fachbereich</span>
<div style="left:567px;top:386px;width:404px;height:19px;border:1px solid #abadb3;background:#f0f0f0;box-shadow:inset 0 0 0 1px #fff"></div>
<span class="t" style="left:572px;top:387px;line-height:18px;letter-spacing:-0.155px;">Energiedatenmanagement</span>
<span class="t" style="left:979px;top:325px;line-height:18px;letter-spacing:-0.113px;">Kommentar</span>
<div style="left:979px;top:342px;width:777px;height:63px;border:1px solid #abadb3;background:#f0f0f0;box-shadow:inset 0 0 0 1px #fff"></div>
<span class="t" style="left:984px;top:344px;line-height:16px;letter-spacing:-0.159px;">Erstellt je nach übergebenen Parametern bis zu 3 verschiedene CSV-Dateien für einen Ersatzwertreport. Diese können dann optional direkt an</span>
<span class="t" style="left:984px;top:359px;line-height:16px;letter-spacing:-0.143px;">eine dem Batchjob zu übergebene E-Mail-Adresse versendet werden.</span>
<svg width="10" height="7" viewBox="0 0 10 7" style="position:absolute;left:1741px;top:349px;"><path d="M1 5.5 L5 1.5 L9 5.5" fill="none" stroke="#bcbcbc" stroke-width="1.6"/></svg>
<svg width="10" height="7" viewBox="0 0 10 7" style="position:absolute;left:1741px;top:392px;"><path d="M1 1.5 L5 5.5 L9 1.5" fill="none" stroke="#bcbcbc" stroke-width="1.6"/></svg>
<div style="left:567px;top:422px;width:1189px;height:20px;border:1px solid #abadb3;background:#fff"></div>
<svg width="16" height="16" viewBox="0 0 16 16" style="position:absolute;left:1738px;top:424px;"><path d="M0.8 1.5 H15.2 L9.8 8 V14.5 L6.2 12.5 V8Z" fill="#5fb2ee" stroke="#2a84c6" stroke-width="1" stroke-linejoin="round"/>
<ellipse cx="8" cy="1.9" rx="6.6" ry="1.3" fill="#d8eefc" stroke="#2a84c6" stroke-width="0.7"/>
<path d="M7.5 8 V12.8" stroke="#bfe2fb" stroke-width="1"/></svg>
<!-- table2 -->
<div style="left:567px;top:451px;width:1189px;height:490px;border:1px solid #828282;background:#fff"></div>
<div style="left:869px;top:453px;width:1px;height:480px;background:#ececec"></div>
<div style="left:969px;top:453px;width:1px;height:480px;background:#ececec"></div>
<div style="left:1222px;top:453px;width:1px;height:480px;background:#ececec"></div>
<div style="left:1722px;top:453px;width:1px;height:480px;background:#ececec"></div>
<div style="left:568px;top:495px;width:1187px;height:1px;background:#efefef"></div>
<div style="left:568px;top:514px;width:1187px;height:1px;background:#efefef"></div>
<div style="left:568px;top:533px;width:1187px;height:1px;background:#efefef"></div>
<div style="left:568px;top:552px;width:1187px;height:1px;background:#efefef"></div>
<div style="left:568px;top:571px;width:1187px;height:1px;background:#efefef"></div>
<div style="left:568px;top:590px;width:1187px;height:1px;background:#efefef"></div>
<div style="left:568px;top:609px;width:1187px;height:1px;background:#efefef"></div>
<div style="left:568px;top:628px;width:1187px;height:1px;background:#efefef"></div>
<div style="left:568px;top:647px;width:1187px;height:1px;background:#efefef"></div>
<div style="left:568px;top:666px;width:1187px;height:1px;background:#efefef"></div>
<div style="left:568px;top:685px;width:1187px;height:1px;background:#efefef"></div>
<div style="left:568px;top:704px;width:1187px;height:1px;background:#efefef"></div>
<div style="left:568px;top:723px;width:1187px;height:1px;background:#efefef"></div>
<div style="left:568px;top:742px;width:1187px;height:1px;background:#efefef"></div>
<div style="left:568px;top:761px;width:1187px;height:1px;background:#efefef"></div>
<div style="left:568px;top:780px;width:1187px;height:1px;background:#efefef"></div>
<div style="left:568px;top:799px;width:1187px;height:1px;background:#efefef"></div>
<div style="left:568px;top:818px;width:1187px;height:1px;background:#efefef"></div>
<div style="left:568px;top:837px;width:1187px;height:1px;background:#efefef"></div>
<div style="left:568px;top:856px;width:1187px;height:1px;background:#efefef"></div>
<div style="left:568px;top:875px;width:1187px;height:1px;background:#efefef"></div>
<div style="left:568px;top:894px;width:1187px;height:1px;background:#efefef"></div>
<div style="left:568px;top:913px;width:1187px;height:1px;background:#efefef"></div>
<div style="left:568px;top:932px;width:1187px;height:1px;background:#efefef"></div>
<span class="t" style="left:575px;top:455px;line-height:20px;letter-spacing:-0.335px;">Parameter</span>
<span class="t" style="left:875px;top:455px;line-height:20px;letter-spacing:-0.115px;">Typ</span>
<span class="t" style="left:975px;top:455px;line-height:20px;letter-spacing:-0.027px;">Wert</span>
<span class="t" style="left:1228px;top:455px;line-height:20px;letter-spacing:-0.115px;">Beschreibung</span>
<span class="t" style="left:575px;top:478px;line-height:19px;letter-spacing:0.033px;">Startpunkt</span>
<span class="t" style="left:875px;top:478px;line-height:19px;">Nummer</span>
<span class="t" style="left:975px;top:478px;line-height:19px;letter-spacing:0.164px;">-1</span>
<span class="t" style="left:1228px;top:478px;line-height:19px;letter-spacing:-0.085px;">Ergibt die Differenz (entsprechend der Zeiteinheit) zwischen dem Systemdatum und dem S...</span>
<span class="t" style="left:575px;top:497px;line-height:19px;letter-spacing:-0.07px;">E-Mail Absender</span>
<span class="t" style="left:875px;top:497px;line-height:19px;letter-spacing:-0.057px;">String</span>
<span class="t" style="left:975px;top:497px;line-height:19px;letter-spacing:-0.078px;">editest@stadtwerke-ilmenau.de</span>
<span class="t" style="left:1228px;top:497px;line-height:19px;letter-spacing:-0.138px;">E-Mail-Adresse des Absenders. Pflicht, wenn der Parameter "E-Mail-Versand J/N" = J</span>
<span class="t" style="left:575px;top:516px;line-height:19px;letter-spacing:-0.159px;">Anteil Ersatzwert J/N</span>
<span class="t" style="left:875px;top:516px;line-height:19px;letter-spacing:-0.057px;">String</span>
<span class="t" style="left:1228px;top:516px;line-height:19px;letter-spacing:-0.151px;">Report: Ausgabe des Anteils von Ersatzwerten am RLM-Gesamtenergievolumen für den Be...</span>
<span class="t" style="left:575px;top:535px;line-height:19px;letter-spacing:-0.081px;">Archivverzeichnis</span>
<span class="t" style="left:875px;top:535px;line-height:19px;letter-spacing:-0.057px;">String</span>
<span class="t" style="left:1228px;top:535px;line-height:19px;letter-spacing:-0.132px;">Datenbankverzeichnis in welches die erstellten CSV-Dateien nach erfolgtem E-Mail-Versan...</span>
<span class="t" style="left:575px;top:554px;line-height:19px;letter-spacing:-0.303px;">Art des MSB</span>
<span class="t" style="left:875px;top:554px;line-height:19px;letter-spacing:-0.057px;">String</span>
<span class="t" style="left:1228px;top:554px;line-height:19px;letter-spacing:-0.19px;">Art des Messstellenbetreibers (MSB e.U. = eigener Messstellenbetreiber, MSB f.U. = fremde...</span>
<span class="t" style="left:575px;top:573px;line-height:19px;letter-spacing:-0.032px;">E-Mail Betreff</span>
<span class="t" style="left:875px;top:573px;line-height:19px;letter-spacing:-0.057px;">String</span>
<span class="t" style="left:975px;top:573px;line-height:19px;letter-spacing:-0.197px;">Ersatzwertreport Strom</span>
<span class="t" style="left:1228px;top:573px;line-height:19px;letter-spacing:-0.148px;">Betreff der zu versendenden E-Mail. Ist kein Betreff angegeben, so wird dieser aus dem Na...</span>
<span class="t" style="left:575px;top:592px;line-height:19px;letter-spacing:-0.076px;">E-Mail-Versand J/N</span>
<span class="t" style="left:875px;top:592px;line-height:19px;letter-spacing:-0.057px;">String</span>
<span class="t" style="left:975px;top:592px;line-height:19px;letter-spacing:-2.0px;">J</span>
<span class="t" style="left:1228px;top:592px;line-height:19px;letter-spacing:-0.208px;">Sollen die erstellten CSV-Dateien als E-Mail versendet werden? (J/N)</span>
<span class="t" style="left:575px;top:611px;line-height:19px;letter-spacing:-0.127px;">E-Mail Empfänger</span>
<span class="t" style="left:875px;top:611px;line-height:19px;letter-spacing:-0.057px;">String</span>
<span class="t" style="left:975px;top:611px;line-height:19px;letter-spacing:-0.123px;">s.kuehnast@stadtwerke-ilmenau.de</span>
<span class="t" style="left:1228px;top:611px;line-height:19px;letter-spacing:-0.148px;">E-Mail-Adresse des Empfängers. Pflicht, wenn der Parameter "E-Mail-Versand J/N" = J</span>
<span class="t" style="left:575px;top:630px;line-height:19px;letter-spacing:-0.236px;">Energieart</span>
<span class="t" style="left:875px;top:630px;line-height:19px;letter-spacing:-0.057px;">String</span>
<span class="t" style="left:975px;top:630px;line-height:19px;letter-spacing:-2.0px;">E</span>
<span class="t" style="left:1228px;top:630px;line-height:19px;letter-spacing:-0.219px;">Einschränkung der Reporte auf eine angegebene Energieart (E = Elektroenergie, G = Gas)</span>
<span class="t" style="left:575px;top:649px;line-height:19px;letter-spacing:0.038px;">Gültige Netztopologie J/N</span>
<span class="t" style="left:875px;top:649px;line-height:19px;letter-spacing:-0.057px;">String</span>
<span class="t" style="left:1228px;top:649px;line-height:19px;letter-spacing:-0.021px;">Sollen für die Reporte nur Lokationen mit gültiger Netztopologie betrachtet werden? (J/N)</span>
<span class="t" style="left:575px;top:668px;line-height:19px;letter-spacing:-0.378px;">MSB GLN (Liste)</span>
<span class="t" style="left:875px;top:668px;line-height:19px;letter-spacing:-0.057px;">String</span>
<span class="t" style="left:1228px;top:668px;line-height:19px;letter-spacing:-0.204px;">GLN des Messstellenbetreibers, Einschränkung der Reporte auf einen MSB oder eine Liste v...</span>
<span class="t" style="left:575px;top:687px;line-height:19px;letter-spacing:-0.217px;">Messgröße (Liste)</span>
<span class="t" style="left:875px;top:687px;line-height:19px;letter-spacing:-0.057px;">String</span>
<span class="t" style="left:975px;top:687px;line-height:19px;letter-spacing:-0.557px;">1,2</span>
<span class="t" style="left:1228px;top:687px;line-height:19px;letter-spacing:-0.153px;">Einschränkung der Reporte auf eine Messgröße oder eine Liste von Messgrößen (durch Ko...</span>
<span class="t" style="left:575px;top:706px;line-height:19px;letter-spacing:-0.375px;">Regelzone</span>
<span class="t" style="left:875px;top:706px;line-height:19px;letter-spacing:-0.057px;">String</span>
<span class="t" style="left:1228px;top:706px;line-height:19px;letter-spacing:-0.158px;">Einschränkung der Reporte auf eine angegebene Regelzonenkurzbezeichnung</span>
<span class="t" style="left:575px;top:725px;line-height:19px;letter-spacing:-0.153px;">Datenbankverzeichnis</span>
<span class="t" style="left:875px;top:725px;line-height:19px;letter-spacing:-0.057px;">String</span>
<span class="t" style="left:975px;top:725px;line-height:19px;letter-spacing:-0.017px;">/u01/app/oracle/admin/ISTPROD/utl_file_d...</span>
<span class="t" style="left:1228px;top:725px;line-height:19px;letter-spacing:-0.141px;">Datenbankverzeichnis in welches die erstellten CSV-Dateien abgelegt werden sollen.</span>
<span class="t" style="left:575px;top:744px;line-height:19px;letter-spacing:-0.116px;">Lokationen mit Ersatzwert J/N</span>
<span class="t" style="left:875px;top:744px;line-height:19px;letter-spacing:-0.057px;">String</span>
<span class="t" style="left:1228px;top:744px;line-height:19px;letter-spacing:-0.13px;">Report: Ausgabe aller Lokationen, die im Betrachtungszeitraum mindestens einen Ersatzwe...</span>
<span class="t" style="left:575px;top:763px;line-height:19px;letter-spacing:-0.031px;">Lokationen ohne ZFA J/N</span>
<span class="t" style="left:875px;top:763px;line-height:19px;letter-spacing:-0.057px;">String</span>
<span class="t" style="left:1228px;top:763px;line-height:19px;letter-spacing:-0.101px;">Report: Ausgabe aller realen RLM-Lokationen, für die keine ZFA-Daten im Zeitraum vorlieg...</span>
<span class="t" style="left:575px;top:782px;line-height:19px;letter-spacing:0.058px;">Zeiteinheit</span>
<span class="t" style="left:875px;top:782px;line-height:19px;letter-spacing:-0.057px;">String</span>
<span class="t" style="left:975px;top:782px;line-height:19px;letter-spacing:1.0px;">M</span>
<span class="t" style="left:1228px;top:782px;line-height:19px;letter-spacing:-0.101px;">Zeiteinheit - Erlaubte Werte: Tag, Woche, Monat, Jahr</span>
<span class="t" style="left:575px;top:801px;line-height:19px;letter-spacing:-0.043px;">Zeitraum</span>
<span class="t" style="left:875px;top:801px;line-height:19px;">Nummer</span>
<span class="t" style="left:975px;top:801px;line-height:19px;letter-spacing:-0.672px;">1</span>
<span class="t" style="left:1228px;top:801px;line-height:19px;letter-spacing:-0.06px;">Ergibt den Zeitraum (entsprechend der Zeiteinheit).</span>
<div style="left:570px;top:478px;width:1152px;height:17px;border:1px dotted #000"></div>
</body></html>
